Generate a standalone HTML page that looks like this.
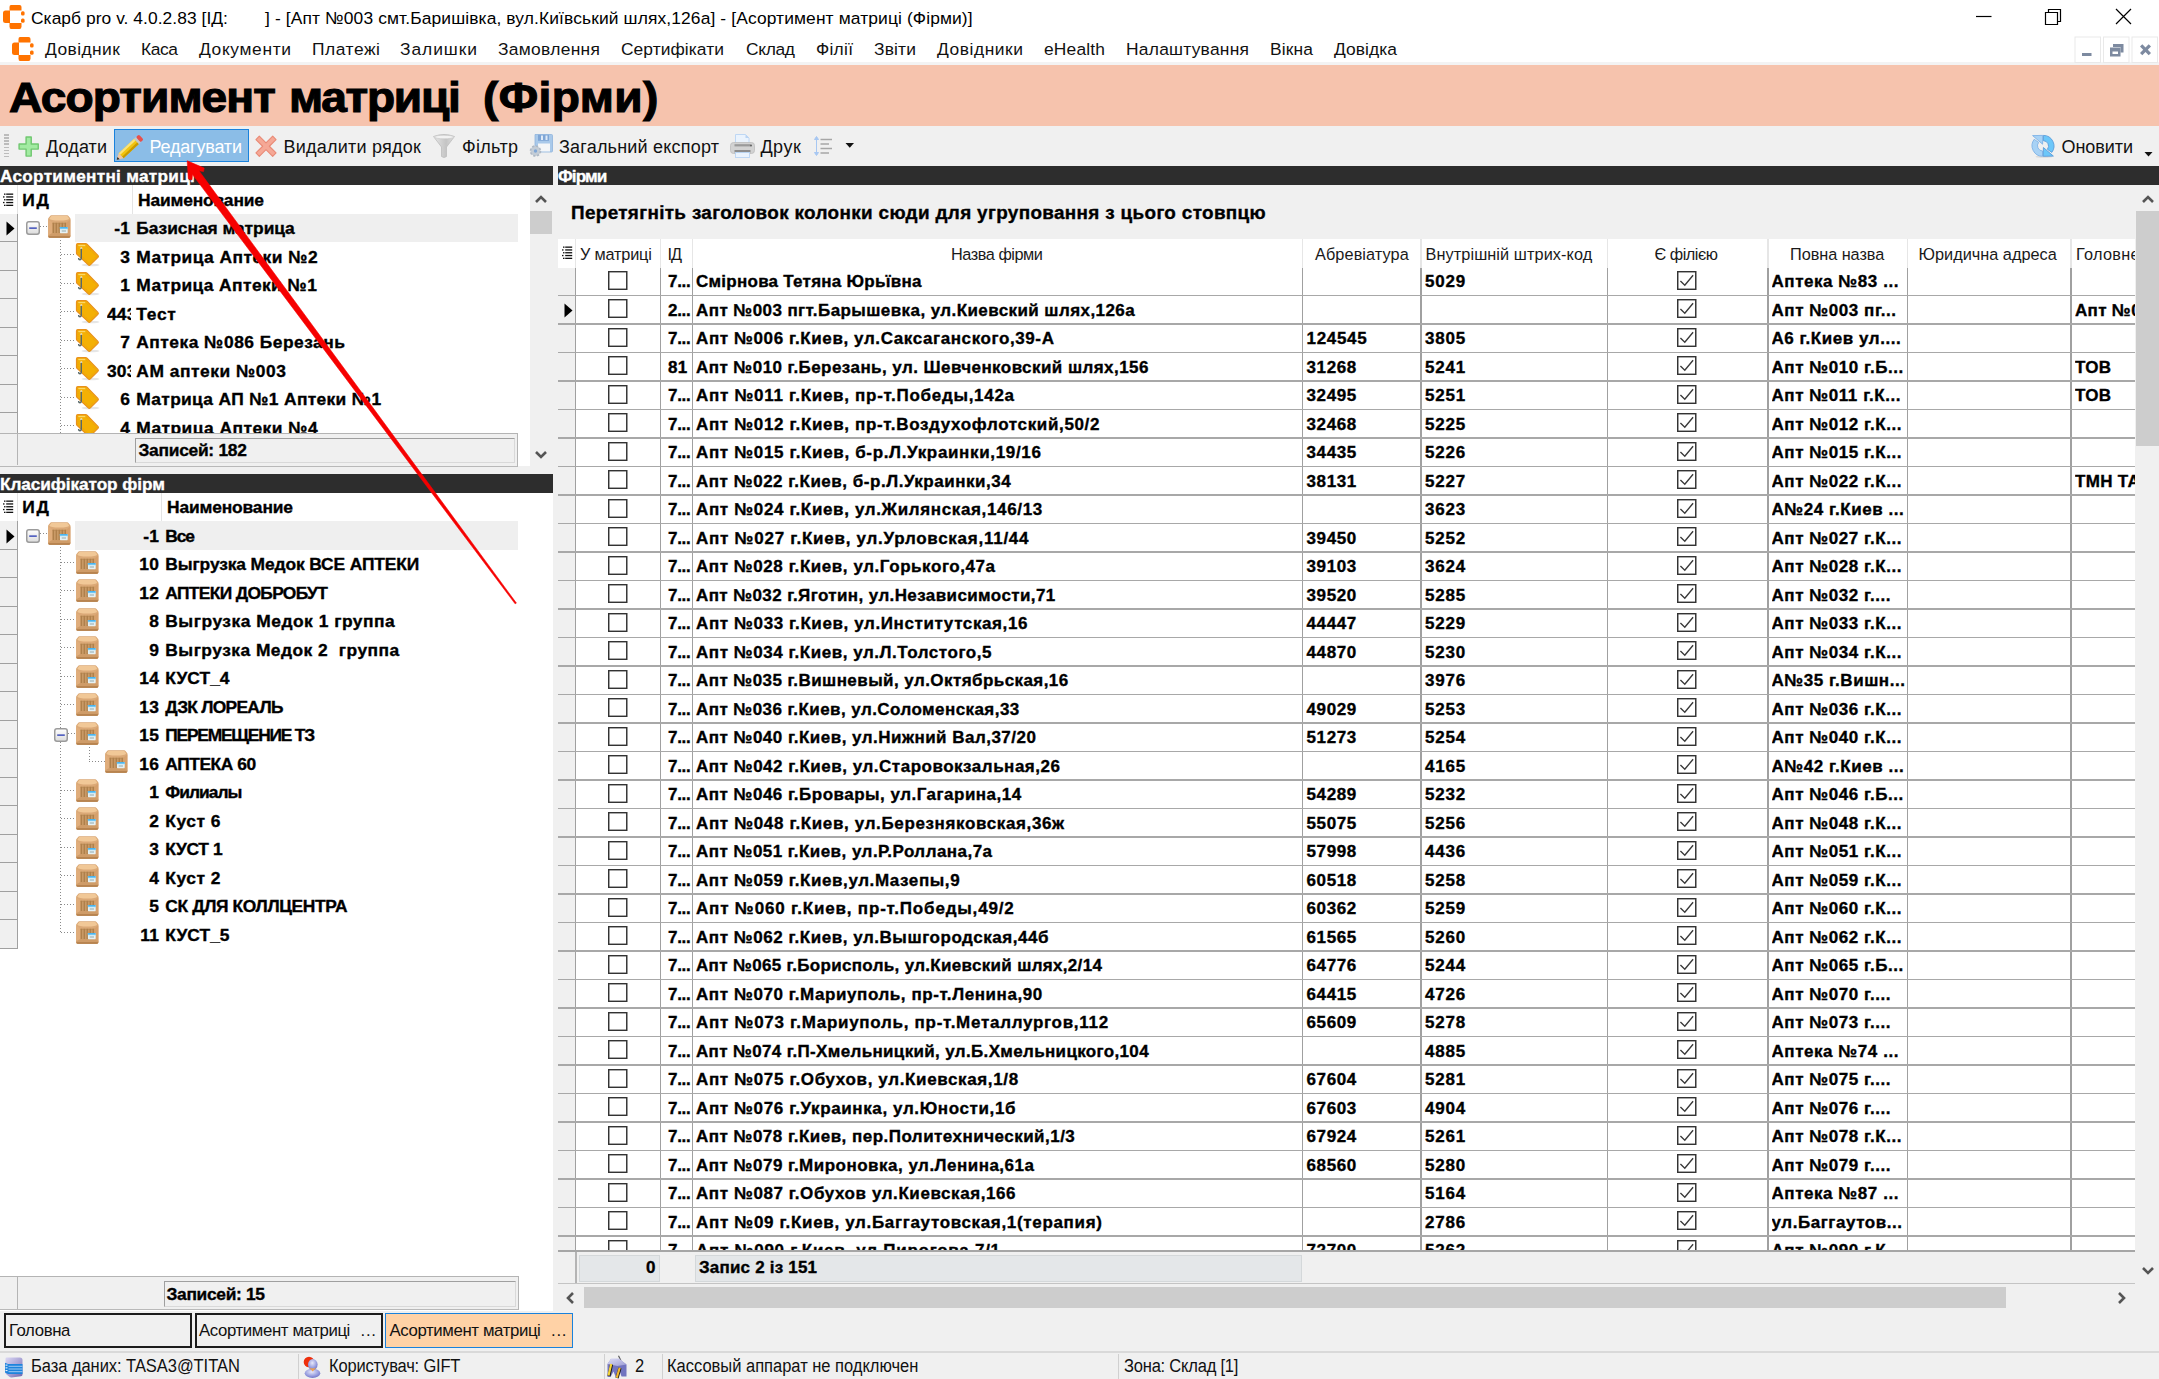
<!DOCTYPE html>
<html><head><meta charset="utf-8"><title>Скарб pro</title>
<style>
html,body{margin:0;padding:0}
body{width:2159px;height:1379px;position:relative;overflow:hidden;background:#f0f0f0;font-family:"Liberation Sans",sans-serif;color:#000}
.a{position:absolute;box-sizing:border-box}
.t{position:absolute;white-space:nowrap;line-height:20px;height:20px}
.b{-webkit-text-stroke:0.35px}
.hv{-webkit-text-stroke:1.1px #000}
svg{position:absolute;overflow:visible}
</style></head><body>
<div class="a" style="left:0px;top:0px;width:2159px;height:36px;background:#fff;"></div><div class="a" style="left:0px;top:36px;width:2159px;height:27px;background:#fff;"></div><div class="a" style="left:0px;top:62px;width:2159px;height:3px;background:#f3f3f3;"></div><svg style="left:3px;top:5px" width="22" height="25" viewBox="0 0 22 25"><g fill="#ff7300"><path d="M8 0h8.5q2 0 2 2v3.5H6.5V2q0-2 1.5-2z"/><path d="M2.5 5.5H7v12.5H2.5Q0 18 0 15.5v-7.5Q0 5.5 2.5 5.5z"/><path d="M6.5 18h12v3.5q0 2.5-2 2.5H8q-1.5 0-1.5-2.5z"/><rect x="18" y="6.2" width="3.6" height="4.2" rx="1.5"/><rect x="18" y="13.5" width="3.6" height="4.2" rx="1.5"/></g></svg><svg style="left:11.5px;top:36.5px" width="22" height="25" viewBox="0 0 22 25"><g fill="#ff7300"><path d="M8 0h8.5q2 0 2 2v3.5H6.5V2q0-2 1.5-2z"/><path d="M2.5 5.5H7v12.5H2.5Q0 18 0 15.5v-7.5Q0 5.5 2.5 5.5z"/><path d="M6.5 18h12v3.5q0 2.5-2 2.5H8q-1.5 0-1.5-2.5z"/><rect x="18" y="6.2" width="3.6" height="4.2" rx="1.5"/><rect x="18" y="13.5" width="3.6" height="4.2" rx="1.5"/></g></svg><span class="t " style="top:8.47px;font-size:17.4px;left:31.0px;letter-spacing:0.05px;">Скарб pro v. 4.0.2.83 [ІД:</span><span class="t " style="top:8.47px;font-size:17.4px;left:265.0px;letter-spacing:0.123px;">] - [Апт №003 смт.Баришівка, вул.Київський шлях,126а] - [Асортимент матриці (Фірми)]</span><svg style="left:1970px;top:0" width="189" height="36" viewBox="0 0 189 36"><g stroke="#000" stroke-width="1.2" fill="none"><path d="M6 16.5h15.5"/><path d="M75.5 12.5h12v12h-12z"/><path d="M78.5 12.5v-3h12v12h-3"/><path d="M146 9l15 15M161 9l-15 15"/></g></svg><svg style="left:2074px;top:36px" width="85" height="28" viewBox="0 0 85 28"><g fill="#fff" stroke="#e9e9e9" stroke-width="1"><rect x="1" y="1" width="25.5" height="25.5"/><rect x="29.5" y="1" width="25.5" height="25.5"/><rect x="58" y="1" width="25.5" height="25.5"/></g><g fill="#7d8aa0"><rect x="8" y="17" width="9.5" height="3"/><path d="M39 8h10.5v8.5h-3v-5.5h-7.5z"/><path d="M36 11.5h10.5v9h-10.5zM38.5 15.5v2.5h5.5v-2.5z" fill-rule="evenodd"/><path d="M66 9.5l2.3-2.3 3.2 3.2 3.2-3.2 2.3 2.3-3.2 3.2 3.2 3.2-2.3 2.3-3.2-3.2-3.2 3.2-2.3-2.3 3.2-3.2z" transform="translate(0,1)"/></g></svg><span class="t " style="top:39.47px;font-size:17.4px;left:45.0px;color:#111;letter-spacing:0.423px;">Довідник</span><span class="t " style="top:39.47px;font-size:17.4px;left:141.0px;color:#111;letter-spacing:-0.427px;">Каса</span><span class="t " style="top:39.47px;font-size:17.4px;left:199.0px;color:#111;letter-spacing:0.636px;">Документи</span><span class="t " style="top:39.47px;font-size:17.4px;left:312.0px;color:#111;letter-spacing:0.545px;">Платежі</span><span class="t " style="top:39.47px;font-size:17.4px;left:400.0px;color:#111;letter-spacing:0.943px;">Залишки</span><span class="t " style="top:39.47px;font-size:17.4px;left:498.0px;color:#111;letter-spacing:0.313px;">Замовлення</span><span class="t " style="top:39.47px;font-size:17.4px;left:621.0px;color:#111;letter-spacing:0.06px;">Сертифікати</span><span class="t " style="top:39.47px;font-size:17.4px;left:746.0px;color:#111;letter-spacing:-0.343px;">Склад</span><span class="t " style="top:39.47px;font-size:17.4px;left:816.0px;color:#111;letter-spacing:0.267px;">Філії</span><span class="t " style="top:39.47px;font-size:17.4px;left:874.0px;color:#111;letter-spacing:0.169px;">Звіти</span><span class="t " style="top:39.47px;font-size:17.4px;left:937.0px;color:#111;letter-spacing:0.549px;">Довідники</span><span class="t " style="top:39.47px;font-size:17.4px;left:1044.0px;color:#111;letter-spacing:0.176px;">eHealth</span><span class="t " style="top:39.47px;font-size:17.4px;left:1126.0px;color:#111;letter-spacing:0.251px;">Налаштування</span><span class="t " style="top:39.47px;font-size:17.4px;left:1270.0px;color:#111;letter-spacing:0.136px;">Вікна</span><span class="t " style="top:39.47px;font-size:17.4px;left:1334.0px;color:#111;letter-spacing:0.06px;">Довідка</span><div class="a" style="left:0px;top:64.5px;width:2159px;height:61.5px;background:#f6c3ad;"></div><span class="t hv b" style="top:86.84px;left:8.60px;font-size:42.9px;letter-spacing:-0.86px;transform:scaleX(1.075);transform-origin:0 0;font-weight:bold;">Асортимент</span><span class="t hv b" style="top:86.84px;left:288.60px;font-size:42.9px;letter-spacing:-1.178px;transform:scaleX(1.075);transform-origin:0 0;font-weight:bold;">матриці</span><span class="t hv b" style="top:86.84px;left:483.00px;font-size:42.9px;letter-spacing:0.381px;transform:scaleX(1.075);transform-origin:0 0;font-weight:bold;">(Фірми)</span><div class="a" style="left:0px;top:126px;width:2159px;height:40px;background:#f0f0f0;"></div><div class="a" style="left:4.3px;top:134.3px;width:5.2px;height:1.4px;background:#bcbcbc;"></div><div class="a" style="left:4.3px;top:137.35000000000002px;width:5.2px;height:1.4px;background:#bcbcbc;"></div><div class="a" style="left:4.3px;top:140.4px;width:5.2px;height:1.4px;background:#bcbcbc;"></div><div class="a" style="left:4.3px;top:143.45000000000002px;width:5.2px;height:1.4px;background:#bcbcbc;"></div><div class="a" style="left:4.3px;top:146.5px;width:5.2px;height:1.4px;background:#bcbcbc;"></div><div class="a" style="left:4.3px;top:149.55px;width:5.2px;height:1.4px;background:#bcbcbc;"></div><div class="a" style="left:4.3px;top:152.60000000000002px;width:5.2px;height:1.4px;background:#bcbcbc;"></div><div class="a" style="left:4.3px;top:155.65px;width:5.2px;height:1.4px;background:#bcbcbc;"></div><svg style="left:17.6px;top:135.5px" width="21.8" height="21.5" viewBox="0 0 23 23"><path d="M8.5 1h5.5v7.5h7.5v5.5h-7.5v7.5h-5.5v-7.5h-7.5v-5.5h7.5z" fill="#a2eba2" stroke="#70c770" stroke-width="1.5" stroke-linejoin="round"/></svg><span class="t " style="top:137.26px;font-size:18px;left:46.0px;color:#111;letter-spacing:0.122px;">Додати</span><div class="a" style="left:114px;top:129.3px;width:134.8px;height:33px;background:#8bbde7;border:1.6px solid #1a82dc;"></div><svg style="left:117px;top:133px" width="28" height="27" viewBox="0 0 28 27"><g transform="rotate(-43 14 13.5)"><rect x="0.5" y="10" width="21" height="7" fill="#f1c40f"/><rect x="0.5" y="10" width="21" height="2.3" fill="#f9e27a"/><rect x="0.5" y="14.8" width="21" height="2.2" fill="#c99a00"/><path d="M0.5 10l-6 3.5 6 3.5z" fill="#f3c6a0"/><path d="M-5.5 13.5l2.5-1.5v3z" fill="#222"/><rect x="21.5" y="10" width="2.5" height="7" fill="#c8c8c8"/><rect x="24" y="10" width="4" height="7" rx="1.5" fill="#e8504a"/></g></svg><span class="t " style="top:137.26px;font-size:18px;left:149.5px;color:#fff;letter-spacing:-0.192px;">Редагувати</span><svg style="left:254.7px;top:135px" width="22" height="22.5" viewBox="0 0 23 23"><path d="M4.5 1l7 7 7-7 3.5 3.5-7 7 7 7-3.5 3.5-7-7-7 7-3.5-3.5 7-7-7-7z" fill="#f5a896" stroke="#e98a76" stroke-width="1.2" stroke-linejoin="round"/></svg><span class="t " style="top:137.26px;font-size:18px;left:283.5px;color:#111;letter-spacing:0.227px;">Видалити рядок</span><svg style="left:433px;top:134px" width="22" height="24" viewBox="0 0 22 24"><defs><linearGradient id="fg" x1="0" x2="1"><stop offset="0" stop-color="#e6e6e6"/><stop offset="0.6" stop-color="#c4c4c4"/><stop offset="1" stop-color="#e0e0e0"/></linearGradient></defs><path d="M0.5 2.5q10.5-4 21 0l-8 10.5v9.5q-2.5 2-5 0v-9.5z" fill="url(#fg)" stroke="#bdbdbd" stroke-width="0.8"/><ellipse cx="11" cy="3" rx="9.5" ry="1.8" fill="#f2f2f2" stroke="#c8c8c8" stroke-width="0.6"/></svg><span class="t " style="top:137.26px;font-size:18px;left:462.0px;color:#111;letter-spacing:0.31px;">Фільтр</span><svg style="left:530px;top:134px" width="23" height="24" viewBox="0 0 23 24"><path d="M5 0.5h16.5q1 0 1 1v15.5q0 1-1 1h-16.5z" fill="#a9c9ea" stroke="#8fb4dc" stroke-width="0.8"/><rect x="8" y="0.8" width="11" height="6" fill="#7fa6d6"/><rect x="11" y="1.5" width="2" height="4.5" fill="#dfeaf7"/><rect x="15.5" y="1.5" width="2" height="4.5" fill="#dfeaf7"/><rect x="8" y="9.5" width="12" height="8" fill="#f4f6f8"/><circle cx="5.5" cy="17" r="5" fill="#c3ccd6" stroke="#aeb8c4" stroke-width="1.6" stroke-dasharray="2.2 1.7"/><circle cx="5.5" cy="17" r="1.7" fill="#7fa6d6"/></svg><span class="t " style="top:137.26px;font-size:18px;left:559.0px;color:#111;letter-spacing:0.207px;">Загальний експорт</span><svg style="left:730px;top:134px" width="25" height="24" viewBox="0 0 25 24"><path d="M5.5 0.5h10l3.5 3.5v7h-13.5z" fill="#eaf3fd" stroke="#b9d4f3" stroke-width="0.9"/><path d="M15.5 0.5v3.5h3.5z" fill="#b9d4f3"/><rect x="0.5" y="8.5" width="24" height="11" rx="3" fill="#d2d2d2" stroke="#bcbcbc" stroke-width="0.8"/><rect x="4.5" y="10.2" width="16" height="2.2" fill="#9a9a9a"/><rect x="4.5" y="16" width="16" height="2.5" fill="#8c8c8c"/><rect x="5.5" y="18.5" width="14" height="5" fill="#eaf3fd" stroke="#b9d4f3" stroke-width="0.9"/><circle cx="21" cy="11.5" r="0.9" fill="#555"/></svg><span class="t " style="top:137.26px;font-size:18px;left:760.4px;color:#111;letter-spacing:0.543px;">Друк</span><svg style="left:813px;top:136px" width="42" height="20" viewBox="0 0 42 20"><g stroke="#a6a6a6" stroke-width="1.5"><path d="M7.5 3.5h11.5M7.5 8h8.5M7.5 12.5h11.5M7.5 17h8.5"/></g><g fill="#a7c7f2" stroke="#a7c7f2" stroke-width="1"><path d="M3.5 2v16" fill="none"/><path d="M3.5 0.5l2 3h-4zM3.5 19.5l2-3h-4z"/></g><path d="M32.5 7h8.5l-4.25 4.8z" fill="#111"/></svg><svg style="left:2032px;top:135px" width="22" height="23" viewBox="0 0 22 23"><ellipse cx="12" cy="21.8" rx="8.5" ry="1" fill="#d9d9d9"/><g id="rh" fill="#a8d2f5" stroke="#7fb2e6" stroke-width="0.9" stroke-linejoin="round"><path d="M10.6 21.3A10.6 10.6 0 0 1 2.2 4.3L6.6 7.4A5.3 5.3 0 0 0 10.6 16z"/><path d="M0.6 0.6L10.8 0.4 10.6 9.2z"/></g><g transform="rotate(180 11 10.85)" fill="#6cc7f9" stroke="#5a9cda" stroke-width="0.9" stroke-linejoin="round"><path d="M10.6 21.3A10.6 10.6 0 0 1 2.2 4.3L6.6 7.4A5.3 5.3 0 0 0 10.6 16z"/><path d="M0.6 0.6L10.8 0.4 10.6 9.2z"/></g></svg><span class="t " style="top:137.26px;font-size:18px;left:2061.5px;color:#111;letter-spacing:-0.068px;">Оновити</span><svg style="left:2144px;top:152px" width="9" height="5" viewBox="0 0 9 5"><path d="M0.5 0h8l-4 4.5z" fill="#111"/></svg><div class="a" style="left:0px;top:165.5px;width:553px;height:19.5px;background:#2d2d2d;"></div><div class="a" style="left:558px;top:165.5px;width:1601px;height:19.5px;background:#2d2d2d;"></div><span class="t b" style="top:166.04px;font-size:17.2px;left:0.0px;font-weight:bold;color:#fff;letter-spacing:0.287px;">Асортиментні матриці</span><span class="t b" style="top:166.04px;font-size:17.2px;left:558.0px;font-weight:bold;color:#fff;letter-spacing:-0.89px;">Фірми</span><div class="a" style="left:0px;top:185px;width:553px;height:281px;background:#fff;"></div><svg style="left:3px;top:192.5px" width="11" height="15" viewBox="0 0 11 15"><g fill="#111"><rect x="1" y="0.5" width="1.5" height="1.3"/><rect x="3.2" y="0.5" width="7" height="1.3"/><rect x="0" y="3.3" width="1.5" height="1.3"/><rect x="3.2" y="3.3" width="7" height="1.3"/><rect x="1" y="6.1" width="1.5" height="1.3"/><rect x="3.2" y="6.1" width="7" height="1.3"/><rect x="0" y="8.899999999999999" width="1.5" height="1.3"/><rect x="3.2" y="8.899999999999999" width="7" height="1.3"/><rect x="1" y="11.7" width="1.5" height="1.3"/><rect x="3.2" y="11.7" width="7" height="1.3"/></g></svg><div class="a" style="left:17px;top:185px;width:1px;height:29px;background:#e4e4e4;"></div><div class="a" style="left:132px;top:185px;width:1px;height:29px;background:#e4e4e4;"></div><span class="t b" style="top:189.97px;font-size:17.4px;left:22.2px;font-weight:bold;letter-spacing:1.918px;">ИД</span><span class="t b" style="top:189.97px;font-size:17.4px;left:138.0px;font-weight:bold;letter-spacing:-0.148px;">Наименование</span><div class="a" style="left:0;top:213.5px;width:529px;height:219.5px;overflow:hidden"><div class="a" style="left:0px;top:0px;width:17.5px;height:228.0px;background:#f0f0f0;border-right:1.5px solid #a0a0a0;"></div><div class="a" style="left:0px;top:27.5px;width:17px;height:1.2px;background:#a0a0a0;"></div><div class="a" style="left:0px;top:56.0px;width:17px;height:1.2px;background:#a0a0a0;"></div><div class="a" style="left:0px;top:84.5px;width:17px;height:1.2px;background:#a0a0a0;"></div><div class="a" style="left:0px;top:113.0px;width:17px;height:1.2px;background:#a0a0a0;"></div><div class="a" style="left:0px;top:141.5px;width:17px;height:1.2px;background:#a0a0a0;"></div><div class="a" style="left:0px;top:170.0px;width:17px;height:1.2px;background:#a0a0a0;"></div><div class="a" style="left:0px;top:198.5px;width:17px;height:1.2px;background:#a0a0a0;"></div><div class="a" style="left:0px;top:227.0px;width:17px;height:1.2px;background:#a0a0a0;"></div><div class="a" style="left:75px;top:0px;width:443px;height:28.5px;background:#efefef;"></div><svg style="left:5.5px;top:7.5px" width="9" height="15" viewBox="0 0 9 15"><path d="M0.5 0.5v14l8-7z" fill="#000"/></svg><div class="a" style="left:60px;top:26px;width:1px;height:193.5px;background:repeating-linear-gradient(180deg,#8a8a8a 0 1px,transparent 1px 3px)"></div><svg style="left:25.5px;top:7.5px" width="14" height="14" viewBox="0 0 14 14"><defs><linearGradient id="eg1" x1="0" y1="0" x2="0" y2="1"><stop offset="0" stop-color="#fff"/><stop offset="1" stop-color="#dcdcdc"/></linearGradient></defs><rect x="0.75" y="0.75" width="12.5" height="12.5" rx="2.2" fill="url(#eg1)" stroke="#9b9b9b" stroke-width="1.5"/><rect x="3.2" y="6.3" width="7.6" height="1.7" fill="#5563c1"/></svg><div class="a" style="left:40px;top:12.4px;width:8px;height:1px;background:repeating-linear-gradient(90deg,#8a8a8a 0 1px,transparent 1px 3px)"></div><svg style="left:48.4px;top:1.3px" width="22.6" height="22.8" viewBox="0 0 22.6 22.8"><path d="M3.3 0.3h16q0.7 0 1.2 0.6l1.6 2q0.4 0.5 0.4 1.2v16.8q0 1.6-1.6 1.6h-19.2q-1.6 0-1.6-1.6v-16.8q0-0.7 0.4-1.2l1.6-2q0.5-0.6 1.2-0.6z" fill="#dba977"/><path d="M3.3 0.9h16l1.9 2.6q-1 2-9.9 2t-9.9-2z" fill="#f1c897"/><path d="M0.3 4.5l4.2 3.3v10.2l-4.2 3.2z" fill="#e0ad7b"/><path d="M22.3 4.5l-4.2 3.3v10.2l4.2 3.2z" fill="#d6a06c"/><rect x="4.5" y="7.8" width="13.6" height="10.2" fill="#c99a66"/><g fill="#a97a45"><rect x="4.7" y="7.8" width="1.1" height="10.2"/><rect x="7.7" y="7.8" width="1.1" height="10.2"/><rect x="10.7" y="7.8" width="1.1" height="10.2"/><rect x="13.7" y="7.8" width="1.1" height="10.2"/><rect x="16.7" y="7.8" width="1.1" height="10.2"/></g><rect x="4.5" y="7.8" width="13.6" height="1" fill="#b28350" opacity="0.6"/><path d="M0.3 20.3l4.2-2.3h13.6l4.2 2.3v0.9q0 1.6-1.6 1.6h-18.8q-1.6 0-1.6-1.6z" fill="#cf9c68"/><path d="M0.4 21.2h21.8q0 1.6-1.6 1.6h-18.6q-1.6 0-1.6-1.6z" fill="#b17d48"/><rect x="11.9" y="11.9" width="7.8" height="6.4" rx="0.7" fill="#e6f1f3"/><path d="M12.6 11.9h6.4q0.7 0 0.7 0.7v1.5h-7.8v-1.5q0-0.7 0.7-0.7z" fill="#49b4ef"/><rect x="11.9" y="13.4" width="7.8" height="0.8" fill="#8dd6f8"/><rect x="13.7" y="15.1" width="4.3" height="1.8" fill="#b9c9cc"/></svg><span class="t b" style="top:4.87px;left:70px;width:60px;text-align:right;font-size:17.4px;font-weight:bold;letter-spacing:0.15px">-1</span><span class="t b" style="top:4.87px;font-size:17.4px;left:136.3px;font-weight:bold;letter-spacing:-0.051px;">Базисная матрица</span><div class="a" style="left:61px;top:40.9px;width:15px;height:1px;background:repeating-linear-gradient(90deg,#8a8a8a 0 1px,transparent 1px 3px)"></div><svg style="left:76.4px;top:29.8px" width="24" height="24" viewBox="0 0 24 24"><ellipse cx="14.5" cy="22" rx="9" ry="1.3" fill="#e6e6e6"/><path d="M1.9 0.6H9.6Q10.4 0.6 11 1.2L21.9 12.4Q22.8 13.4 21.9 14.3L14.3 21.9Q13.3 22.8 12.3 21.9L1 11.3Q0.5 10.8 0.5 10V2Q0.5 0.6 1.9 0.6Z" fill="#f4b004" stroke="#e8901c" stroke-width="1.2"/><path d="M2.2 2.3H9.4L20.3 13.4L13.3 20.4L2.2 9.9Z" fill="none" stroke="#e39a12" stroke-width="0.6" stroke-dasharray="1.2 0.8"/><path d="M2.3 2.5h7" stroke="#fbd768" stroke-width="1.3" fill="none"/><circle cx="5.3" cy="5.3" r="1.1" fill="#f3ead0"/><path d="M5.3 5.8V14.5Q5.3 16.8 3.9 16.8Q2.6 16.8 2.6 15" fill="none" stroke="#586868" stroke-width="1.4"/></svg><span class="t b" style="top:33.37px;left:70px;width:60px;text-align:right;font-size:17.4px;font-weight:bold;letter-spacing:0.15px">3</span><span class="t b" style="top:33.37px;font-size:17.4px;left:136.3px;font-weight:bold;letter-spacing:0.452px;">Матрица Аптеки №2</span><div class="a" style="left:61px;top:69.4px;width:15px;height:1px;background:repeating-linear-gradient(90deg,#8a8a8a 0 1px,transparent 1px 3px)"></div><svg style="left:76.4px;top:58.3px" width="24" height="24" viewBox="0 0 24 24"><ellipse cx="14.5" cy="22" rx="9" ry="1.3" fill="#e6e6e6"/><path d="M1.9 0.6H9.6Q10.4 0.6 11 1.2L21.9 12.4Q22.8 13.4 21.9 14.3L14.3 21.9Q13.3 22.8 12.3 21.9L1 11.3Q0.5 10.8 0.5 10V2Q0.5 0.6 1.9 0.6Z" fill="#f4b004" stroke="#e8901c" stroke-width="1.2"/><path d="M2.2 2.3H9.4L20.3 13.4L13.3 20.4L2.2 9.9Z" fill="none" stroke="#e39a12" stroke-width="0.6" stroke-dasharray="1.2 0.8"/><path d="M2.3 2.5h7" stroke="#fbd768" stroke-width="1.3" fill="none"/><circle cx="5.3" cy="5.3" r="1.1" fill="#f3ead0"/><path d="M5.3 5.8V14.5Q5.3 16.8 3.9 16.8Q2.6 16.8 2.6 15" fill="none" stroke="#586868" stroke-width="1.4"/></svg><span class="t b" style="top:61.87px;left:70px;width:60px;text-align:right;font-size:17.4px;font-weight:bold;letter-spacing:0.15px">1</span><span class="t b" style="top:61.87px;font-size:17.4px;left:136.3px;font-weight:bold;letter-spacing:0.402px;">Матрица Аптеки №1</span><div class="a" style="left:61px;top:97.9px;width:15px;height:1px;background:repeating-linear-gradient(90deg,#8a8a8a 0 1px,transparent 1px 3px)"></div><svg style="left:76.4px;top:86.8px" width="24" height="24" viewBox="0 0 24 24"><ellipse cx="14.5" cy="22" rx="9" ry="1.3" fill="#e6e6e6"/><path d="M1.9 0.6H9.6Q10.4 0.6 11 1.2L21.9 12.4Q22.8 13.4 21.9 14.3L14.3 21.9Q13.3 22.8 12.3 21.9L1 11.3Q0.5 10.8 0.5 10V2Q0.5 0.6 1.9 0.6Z" fill="#f4b004" stroke="#e8901c" stroke-width="1.2"/><path d="M2.2 2.3H9.4L20.3 13.4L13.3 20.4L2.2 9.9Z" fill="none" stroke="#e39a12" stroke-width="0.6" stroke-dasharray="1.2 0.8"/><path d="M2.3 2.5h7" stroke="#fbd768" stroke-width="1.3" fill="none"/><circle cx="5.3" cy="5.3" r="1.1" fill="#f3ead0"/><path d="M5.3 5.8V14.5Q5.3 16.8 3.9 16.8Q2.6 16.8 2.6 15" fill="none" stroke="#586868" stroke-width="1.4"/></svg><span class="t b" style="top:90.37px;font-size:17.4px;left:107px;font-weight:bold;letter-spacing:0.15px;width:24px;overflow:hidden;">443</span><span class="t b" style="top:90.37px;font-size:17.4px;left:136.3px;font-weight:bold;letter-spacing:0.73px;">Тест</span><div class="a" style="left:61px;top:126.4px;width:15px;height:1px;background:repeating-linear-gradient(90deg,#8a8a8a 0 1px,transparent 1px 3px)"></div><svg style="left:76.4px;top:115.3px" width="24" height="24" viewBox="0 0 24 24"><ellipse cx="14.5" cy="22" rx="9" ry="1.3" fill="#e6e6e6"/><path d="M1.9 0.6H9.6Q10.4 0.6 11 1.2L21.9 12.4Q22.8 13.4 21.9 14.3L14.3 21.9Q13.3 22.8 12.3 21.9L1 11.3Q0.5 10.8 0.5 10V2Q0.5 0.6 1.9 0.6Z" fill="#f4b004" stroke="#e8901c" stroke-width="1.2"/><path d="M2.2 2.3H9.4L20.3 13.4L13.3 20.4L2.2 9.9Z" fill="none" stroke="#e39a12" stroke-width="0.6" stroke-dasharray="1.2 0.8"/><path d="M2.3 2.5h7" stroke="#fbd768" stroke-width="1.3" fill="none"/><circle cx="5.3" cy="5.3" r="1.1" fill="#f3ead0"/><path d="M5.3 5.8V14.5Q5.3 16.8 3.9 16.8Q2.6 16.8 2.6 15" fill="none" stroke="#586868" stroke-width="1.4"/></svg><span class="t b" style="top:118.87px;left:70px;width:60px;text-align:right;font-size:17.4px;font-weight:bold;letter-spacing:0.15px">7</span><span class="t b" style="top:118.87px;font-size:17.4px;left:136.3px;font-weight:bold;letter-spacing:0.48px;">Аптека №086 Березань</span><div class="a" style="left:61px;top:154.9px;width:15px;height:1px;background:repeating-linear-gradient(90deg,#8a8a8a 0 1px,transparent 1px 3px)"></div><svg style="left:76.4px;top:143.8px" width="24" height="24" viewBox="0 0 24 24"><ellipse cx="14.5" cy="22" rx="9" ry="1.3" fill="#e6e6e6"/><path d="M1.9 0.6H9.6Q10.4 0.6 11 1.2L21.9 12.4Q22.8 13.4 21.9 14.3L14.3 21.9Q13.3 22.8 12.3 21.9L1 11.3Q0.5 10.8 0.5 10V2Q0.5 0.6 1.9 0.6Z" fill="#f4b004" stroke="#e8901c" stroke-width="1.2"/><path d="M2.2 2.3H9.4L20.3 13.4L13.3 20.4L2.2 9.9Z" fill="none" stroke="#e39a12" stroke-width="0.6" stroke-dasharray="1.2 0.8"/><path d="M2.3 2.5h7" stroke="#fbd768" stroke-width="1.3" fill="none"/><circle cx="5.3" cy="5.3" r="1.1" fill="#f3ead0"/><path d="M5.3 5.8V14.5Q5.3 16.8 3.9 16.8Q2.6 16.8 2.6 15" fill="none" stroke="#586868" stroke-width="1.4"/></svg><span class="t b" style="top:147.37px;font-size:17.4px;left:107px;font-weight:bold;letter-spacing:0.15px;width:24px;overflow:hidden;">303</span><span class="t b" style="top:147.37px;font-size:17.4px;left:136.3px;font-weight:bold;letter-spacing:0.52px;">АМ аптеки №003</span><div class="a" style="left:61px;top:183.4px;width:15px;height:1px;background:repeating-linear-gradient(90deg,#8a8a8a 0 1px,transparent 1px 3px)"></div><svg style="left:76.4px;top:172.3px" width="24" height="24" viewBox="0 0 24 24"><ellipse cx="14.5" cy="22" rx="9" ry="1.3" fill="#e6e6e6"/><path d="M1.9 0.6H9.6Q10.4 0.6 11 1.2L21.9 12.4Q22.8 13.4 21.9 14.3L14.3 21.9Q13.3 22.8 12.3 21.9L1 11.3Q0.5 10.8 0.5 10V2Q0.5 0.6 1.9 0.6Z" fill="#f4b004" stroke="#e8901c" stroke-width="1.2"/><path d="M2.2 2.3H9.4L20.3 13.4L13.3 20.4L2.2 9.9Z" fill="none" stroke="#e39a12" stroke-width="0.6" stroke-dasharray="1.2 0.8"/><path d="M2.3 2.5h7" stroke="#fbd768" stroke-width="1.3" fill="none"/><circle cx="5.3" cy="5.3" r="1.1" fill="#f3ead0"/><path d="M5.3 5.8V14.5Q5.3 16.8 3.9 16.8Q2.6 16.8 2.6 15" fill="none" stroke="#586868" stroke-width="1.4"/></svg><span class="t b" style="top:175.87px;left:70px;width:60px;text-align:right;font-size:17.4px;font-weight:bold;letter-spacing:0.15px">6</span><span class="t b" style="top:175.87px;font-size:17.4px;left:136.3px;font-weight:bold;letter-spacing:0.325px;">Матрица АП №1 Аптеки №1</span><div class="a" style="left:61px;top:211.9px;width:15px;height:1px;background:repeating-linear-gradient(90deg,#8a8a8a 0 1px,transparent 1px 3px)"></div><svg style="left:76.4px;top:200.8px" width="24" height="24" viewBox="0 0 24 24"><ellipse cx="14.5" cy="22" rx="9" ry="1.3" fill="#e6e6e6"/><path d="M1.9 0.6H9.6Q10.4 0.6 11 1.2L21.9 12.4Q22.8 13.4 21.9 14.3L14.3 21.9Q13.3 22.8 12.3 21.9L1 11.3Q0.5 10.8 0.5 10V2Q0.5 0.6 1.9 0.6Z" fill="#f4b004" stroke="#e8901c" stroke-width="1.2"/><path d="M2.2 2.3H9.4L20.3 13.4L13.3 20.4L2.2 9.9Z" fill="none" stroke="#e39a12" stroke-width="0.6" stroke-dasharray="1.2 0.8"/><path d="M2.3 2.5h7" stroke="#fbd768" stroke-width="1.3" fill="none"/><circle cx="5.3" cy="5.3" r="1.1" fill="#f3ead0"/><path d="M5.3 5.8V14.5Q5.3 16.8 3.9 16.8Q2.6 16.8 2.6 15" fill="none" stroke="#586868" stroke-width="1.4"/></svg><span class="t b" style="top:204.37px;left:70px;width:60px;text-align:right;font-size:17.4px;font-weight:bold;letter-spacing:0.15px">4</span><span class="t b" style="top:204.37px;font-size:17.4px;left:136.3px;font-weight:bold;letter-spacing:0.452px;">Матрица Аптеки №4</span></div><div class="a" style="left:0px;top:433px;width:517.5px;height:33.5px;background:#f0f0f0;border-top:1.5px solid #b4b4b4;border-bottom:1.5px solid #b9b9b9;border-right:1.5px solid #b4b4b4;"></div><div class="a" style="left:17px;top:434px;width:1.2px;height:31px;background:#b4b4b4;"></div><div class="a" style="left:135px;top:437.5px;width:380px;height:25.5px;background:#f0f0f0;border:1px solid #d9d9d9;border-left:1.5px solid #9f9f9f;border-top:1.5px solid #9f9f9f;"></div><span class="t b" style="top:439.97px;font-size:17.4px;left:138.5px;font-weight:bold;letter-spacing:-0.276px;">Записей: 182</span><div class="a" style="left:529.5px;top:185px;width:23.5px;height:281px;background:#f0f0f0;"></div><div class="a" style="left:530px;top:211px;width:22px;height:23px;background:#cdcdcd;"></div><svg style="left:535px;top:194.5px" width="12" height="8" viewBox="0 0 12 8"><path d="M1 7l5-5 5 5" fill="none" stroke="#555" stroke-width="2.6"/></svg><svg style="left:535px;top:450.5px" width="12" height="8" viewBox="0 0 12 8"><path d="M1 1l5 5 5-5" fill="none" stroke="#555" stroke-width="2.6"/></svg><div class="a" style="left:0px;top:473.5px;width:553px;height:19px;background:#2d2d2d;"></div><span class="t b" style="top:473.54px;font-size:17.2px;left:0.0px;font-weight:bold;color:#fff;letter-spacing:-0.061px;">Класифікатор фірм</span><div class="a" style="left:0px;top:492.5px;width:553px;height:818px;background:#fff;"></div><svg style="left:3px;top:500.0px" width="11" height="15" viewBox="0 0 11 15"><g fill="#111"><rect x="1" y="0.5" width="1.5" height="1.3"/><rect x="3.2" y="0.5" width="7" height="1.3"/><rect x="0" y="3.3" width="1.5" height="1.3"/><rect x="3.2" y="3.3" width="7" height="1.3"/><rect x="1" y="6.1" width="1.5" height="1.3"/><rect x="3.2" y="6.1" width="7" height="1.3"/><rect x="0" y="8.899999999999999" width="1.5" height="1.3"/><rect x="3.2" y="8.899999999999999" width="7" height="1.3"/><rect x="1" y="11.7" width="1.5" height="1.3"/><rect x="3.2" y="11.7" width="7" height="1.3"/></g></svg><div class="a" style="left:17px;top:492.5px;width:1px;height:29px;background:#e4e4e4;"></div><div class="a" style="left:161px;top:492.5px;width:1px;height:29px;background:#e4e4e4;"></div><span class="t b" style="top:497.47px;font-size:17.4px;left:22.2px;font-weight:bold;letter-spacing:1.918px;">ИД</span><span class="t b" style="top:497.47px;font-size:17.4px;left:167.0px;font-weight:bold;letter-spacing:-0.148px;">Наименование</span><div class="a" style="left:0;top:521.0px;width:529px;height:755.0px;overflow:hidden"><div class="a" style="left:0px;top:0px;width:17.5px;height:427.5px;background:#f0f0f0;border-right:1.5px solid #a0a0a0;"></div><div class="a" style="left:0px;top:27.5px;width:17px;height:1.2px;background:#a0a0a0;"></div><div class="a" style="left:0px;top:56.0px;width:17px;height:1.2px;background:#a0a0a0;"></div><div class="a" style="left:0px;top:84.5px;width:17px;height:1.2px;background:#a0a0a0;"></div><div class="a" style="left:0px;top:113.0px;width:17px;height:1.2px;background:#a0a0a0;"></div><div class="a" style="left:0px;top:141.5px;width:17px;height:1.2px;background:#a0a0a0;"></div><div class="a" style="left:0px;top:170.0px;width:17px;height:1.2px;background:#a0a0a0;"></div><div class="a" style="left:0px;top:198.5px;width:17px;height:1.2px;background:#a0a0a0;"></div><div class="a" style="left:0px;top:227.0px;width:17px;height:1.2px;background:#a0a0a0;"></div><div class="a" style="left:0px;top:255.5px;width:17px;height:1.2px;background:#a0a0a0;"></div><div class="a" style="left:0px;top:284.0px;width:17px;height:1.2px;background:#a0a0a0;"></div><div class="a" style="left:0px;top:312.5px;width:17px;height:1.2px;background:#a0a0a0;"></div><div class="a" style="left:0px;top:341.0px;width:17px;height:1.2px;background:#a0a0a0;"></div><div class="a" style="left:0px;top:369.5px;width:17px;height:1.2px;background:#a0a0a0;"></div><div class="a" style="left:0px;top:398.0px;width:17px;height:1.2px;background:#a0a0a0;"></div><div class="a" style="left:0px;top:426.5px;width:17px;height:1.2px;background:#a0a0a0;"></div><div class="a" style="left:75px;top:0px;width:443px;height:28.5px;background:#efefef;"></div><svg style="left:5.5px;top:7.5px" width="9" height="15" viewBox="0 0 9 15"><path d="M0.5 0.5v14l8-7z" fill="#000"/></svg><div class="a" style="left:60px;top:26px;width:1px;height:386.0px;background:repeating-linear-gradient(180deg,#8a8a8a 0 1px,transparent 1px 3px)"></div><svg style="left:25.5px;top:7.5px" width="14" height="14" viewBox="0 0 14 14"><defs><linearGradient id="eg2" x1="0" y1="0" x2="0" y2="1"><stop offset="0" stop-color="#fff"/><stop offset="1" stop-color="#dcdcdc"/></linearGradient></defs><rect x="0.75" y="0.75" width="12.5" height="12.5" rx="2.2" fill="url(#eg2)" stroke="#9b9b9b" stroke-width="1.5"/><rect x="3.2" y="6.3" width="7.6" height="1.7" fill="#5563c1"/></svg><div class="a" style="left:40px;top:12.4px;width:8px;height:1px;background:repeating-linear-gradient(90deg,#8a8a8a 0 1px,transparent 1px 3px)"></div><svg style="left:48.4px;top:1.3px" width="22.6" height="22.8" viewBox="0 0 22.6 22.8"><path d="M3.3 0.3h16q0.7 0 1.2 0.6l1.6 2q0.4 0.5 0.4 1.2v16.8q0 1.6-1.6 1.6h-19.2q-1.6 0-1.6-1.6v-16.8q0-0.7 0.4-1.2l1.6-2q0.5-0.6 1.2-0.6z" fill="#dba977"/><path d="M3.3 0.9h16l1.9 2.6q-1 2-9.9 2t-9.9-2z" fill="#f1c897"/><path d="M0.3 4.5l4.2 3.3v10.2l-4.2 3.2z" fill="#e0ad7b"/><path d="M22.3 4.5l-4.2 3.3v10.2l4.2 3.2z" fill="#d6a06c"/><rect x="4.5" y="7.8" width="13.6" height="10.2" fill="#c99a66"/><g fill="#a97a45"><rect x="4.7" y="7.8" width="1.1" height="10.2"/><rect x="7.7" y="7.8" width="1.1" height="10.2"/><rect x="10.7" y="7.8" width="1.1" height="10.2"/><rect x="13.7" y="7.8" width="1.1" height="10.2"/><rect x="16.7" y="7.8" width="1.1" height="10.2"/></g><rect x="4.5" y="7.8" width="13.6" height="1" fill="#b28350" opacity="0.6"/><path d="M0.3 20.3l4.2-2.3h13.6l4.2 2.3v0.9q0 1.6-1.6 1.6h-18.8q-1.6 0-1.6-1.6z" fill="#cf9c68"/><path d="M0.4 21.2h21.8q0 1.6-1.6 1.6h-18.6q-1.6 0-1.6-1.6z" fill="#b17d48"/><rect x="11.9" y="11.9" width="7.8" height="6.4" rx="0.7" fill="#e6f1f3"/><path d="M12.6 11.9h6.4q0.7 0 0.7 0.7v1.5h-7.8v-1.5q0-0.7 0.7-0.7z" fill="#49b4ef"/><rect x="11.9" y="13.4" width="7.8" height="0.8" fill="#8dd6f8"/><rect x="13.7" y="15.1" width="4.3" height="1.8" fill="#b9c9cc"/></svg><span class="t b" style="top:4.87px;left:99px;width:60px;text-align:right;font-size:17.4px;font-weight:bold;letter-spacing:0.15px">-1</span><span class="t b" style="top:4.87px;font-size:17.4px;left:165.3px;font-weight:bold;letter-spacing:-1.115px;">Все</span><div class="a" style="left:61px;top:40.9px;width:15px;height:1px;background:repeating-linear-gradient(90deg,#8a8a8a 0 1px,transparent 1px 3px)"></div><svg style="left:76.4px;top:29.8px" width="22.6" height="22.8" viewBox="0 0 22.6 22.8"><path d="M3.3 0.3h16q0.7 0 1.2 0.6l1.6 2q0.4 0.5 0.4 1.2v16.8q0 1.6-1.6 1.6h-19.2q-1.6 0-1.6-1.6v-16.8q0-0.7 0.4-1.2l1.6-2q0.5-0.6 1.2-0.6z" fill="#dba977"/><path d="M3.3 0.9h16l1.9 2.6q-1 2-9.9 2t-9.9-2z" fill="#f1c897"/><path d="M0.3 4.5l4.2 3.3v10.2l-4.2 3.2z" fill="#e0ad7b"/><path d="M22.3 4.5l-4.2 3.3v10.2l4.2 3.2z" fill="#d6a06c"/><rect x="4.5" y="7.8" width="13.6" height="10.2" fill="#c99a66"/><g fill="#a97a45"><rect x="4.7" y="7.8" width="1.1" height="10.2"/><rect x="7.7" y="7.8" width="1.1" height="10.2"/><rect x="10.7" y="7.8" width="1.1" height="10.2"/><rect x="13.7" y="7.8" width="1.1" height="10.2"/><rect x="16.7" y="7.8" width="1.1" height="10.2"/></g><rect x="4.5" y="7.8" width="13.6" height="1" fill="#b28350" opacity="0.6"/><path d="M0.3 20.3l4.2-2.3h13.6l4.2 2.3v0.9q0 1.6-1.6 1.6h-18.8q-1.6 0-1.6-1.6z" fill="#cf9c68"/><path d="M0.4 21.2h21.8q0 1.6-1.6 1.6h-18.6q-1.6 0-1.6-1.6z" fill="#b17d48"/><rect x="11.9" y="11.9" width="7.8" height="6.4" rx="0.7" fill="#e6f1f3"/><path d="M12.6 11.9h6.4q0.7 0 0.7 0.7v1.5h-7.8v-1.5q0-0.7 0.7-0.7z" fill="#49b4ef"/><rect x="11.9" y="13.4" width="7.8" height="0.8" fill="#8dd6f8"/><rect x="13.7" y="15.1" width="4.3" height="1.8" fill="#b9c9cc"/></svg><span class="t b" style="top:33.37px;left:99px;width:60px;text-align:right;font-size:17.4px;font-weight:bold;letter-spacing:0.15px">10</span><span class="t b" style="top:33.37px;font-size:17.4px;left:165.3px;font-weight:bold;letter-spacing:-0.113px;">Выгрузка Медок ВСЕ АПТЕКИ</span><div class="a" style="left:61px;top:69.4px;width:15px;height:1px;background:repeating-linear-gradient(90deg,#8a8a8a 0 1px,transparent 1px 3px)"></div><svg style="left:76.4px;top:58.3px" width="22.6" height="22.8" viewBox="0 0 22.6 22.8"><path d="M3.3 0.3h16q0.7 0 1.2 0.6l1.6 2q0.4 0.5 0.4 1.2v16.8q0 1.6-1.6 1.6h-19.2q-1.6 0-1.6-1.6v-16.8q0-0.7 0.4-1.2l1.6-2q0.5-0.6 1.2-0.6z" fill="#dba977"/><path d="M3.3 0.9h16l1.9 2.6q-1 2-9.9 2t-9.9-2z" fill="#f1c897"/><path d="M0.3 4.5l4.2 3.3v10.2l-4.2 3.2z" fill="#e0ad7b"/><path d="M22.3 4.5l-4.2 3.3v10.2l4.2 3.2z" fill="#d6a06c"/><rect x="4.5" y="7.8" width="13.6" height="10.2" fill="#c99a66"/><g fill="#a97a45"><rect x="4.7" y="7.8" width="1.1" height="10.2"/><rect x="7.7" y="7.8" width="1.1" height="10.2"/><rect x="10.7" y="7.8" width="1.1" height="10.2"/><rect x="13.7" y="7.8" width="1.1" height="10.2"/><rect x="16.7" y="7.8" width="1.1" height="10.2"/></g><rect x="4.5" y="7.8" width="13.6" height="1" fill="#b28350" opacity="0.6"/><path d="M0.3 20.3l4.2-2.3h13.6l4.2 2.3v0.9q0 1.6-1.6 1.6h-18.8q-1.6 0-1.6-1.6z" fill="#cf9c68"/><path d="M0.4 21.2h21.8q0 1.6-1.6 1.6h-18.6q-1.6 0-1.6-1.6z" fill="#b17d48"/><rect x="11.9" y="11.9" width="7.8" height="6.4" rx="0.7" fill="#e6f1f3"/><path d="M12.6 11.9h6.4q0.7 0 0.7 0.7v1.5h-7.8v-1.5q0-0.7 0.7-0.7z" fill="#49b4ef"/><rect x="11.9" y="13.4" width="7.8" height="0.8" fill="#8dd6f8"/><rect x="13.7" y="15.1" width="4.3" height="1.8" fill="#b9c9cc"/></svg><span class="t b" style="top:61.87px;left:99px;width:60px;text-align:right;font-size:17.4px;font-weight:bold;letter-spacing:0.15px">12</span><span class="t b" style="top:61.87px;font-size:17.4px;left:165.3px;font-weight:bold;letter-spacing:-0.658px;">АПТЕКИ ДОБРОБУТ</span><div class="a" style="left:61px;top:97.9px;width:15px;height:1px;background:repeating-linear-gradient(90deg,#8a8a8a 0 1px,transparent 1px 3px)"></div><svg style="left:76.4px;top:86.8px" width="22.6" height="22.8" viewBox="0 0 22.6 22.8"><path d="M3.3 0.3h16q0.7 0 1.2 0.6l1.6 2q0.4 0.5 0.4 1.2v16.8q0 1.6-1.6 1.6h-19.2q-1.6 0-1.6-1.6v-16.8q0-0.7 0.4-1.2l1.6-2q0.5-0.6 1.2-0.6z" fill="#dba977"/><path d="M3.3 0.9h16l1.9 2.6q-1 2-9.9 2t-9.9-2z" fill="#f1c897"/><path d="M0.3 4.5l4.2 3.3v10.2l-4.2 3.2z" fill="#e0ad7b"/><path d="M22.3 4.5l-4.2 3.3v10.2l4.2 3.2z" fill="#d6a06c"/><rect x="4.5" y="7.8" width="13.6" height="10.2" fill="#c99a66"/><g fill="#a97a45"><rect x="4.7" y="7.8" width="1.1" height="10.2"/><rect x="7.7" y="7.8" width="1.1" height="10.2"/><rect x="10.7" y="7.8" width="1.1" height="10.2"/><rect x="13.7" y="7.8" width="1.1" height="10.2"/><rect x="16.7" y="7.8" width="1.1" height="10.2"/></g><rect x="4.5" y="7.8" width="13.6" height="1" fill="#b28350" opacity="0.6"/><path d="M0.3 20.3l4.2-2.3h13.6l4.2 2.3v0.9q0 1.6-1.6 1.6h-18.8q-1.6 0-1.6-1.6z" fill="#cf9c68"/><path d="M0.4 21.2h21.8q0 1.6-1.6 1.6h-18.6q-1.6 0-1.6-1.6z" fill="#b17d48"/><rect x="11.9" y="11.9" width="7.8" height="6.4" rx="0.7" fill="#e6f1f3"/><path d="M12.6 11.9h6.4q0.7 0 0.7 0.7v1.5h-7.8v-1.5q0-0.7 0.7-0.7z" fill="#49b4ef"/><rect x="11.9" y="13.4" width="7.8" height="0.8" fill="#8dd6f8"/><rect x="13.7" y="15.1" width="4.3" height="1.8" fill="#b9c9cc"/></svg><span class="t b" style="top:90.37px;left:99px;width:60px;text-align:right;font-size:17.4px;font-weight:bold;letter-spacing:0.15px">8</span><span class="t b" style="top:90.37px;font-size:17.4px;left:165.3px;font-weight:bold;letter-spacing:0.511px;">Выгрузка Медок 1 группа</span><div class="a" style="left:61px;top:126.4px;width:15px;height:1px;background:repeating-linear-gradient(90deg,#8a8a8a 0 1px,transparent 1px 3px)"></div><svg style="left:76.4px;top:115.3px" width="22.6" height="22.8" viewBox="0 0 22.6 22.8"><path d="M3.3 0.3h16q0.7 0 1.2 0.6l1.6 2q0.4 0.5 0.4 1.2v16.8q0 1.6-1.6 1.6h-19.2q-1.6 0-1.6-1.6v-16.8q0-0.7 0.4-1.2l1.6-2q0.5-0.6 1.2-0.6z" fill="#dba977"/><path d="M3.3 0.9h16l1.9 2.6q-1 2-9.9 2t-9.9-2z" fill="#f1c897"/><path d="M0.3 4.5l4.2 3.3v10.2l-4.2 3.2z" fill="#e0ad7b"/><path d="M22.3 4.5l-4.2 3.3v10.2l4.2 3.2z" fill="#d6a06c"/><rect x="4.5" y="7.8" width="13.6" height="10.2" fill="#c99a66"/><g fill="#a97a45"><rect x="4.7" y="7.8" width="1.1" height="10.2"/><rect x="7.7" y="7.8" width="1.1" height="10.2"/><rect x="10.7" y="7.8" width="1.1" height="10.2"/><rect x="13.7" y="7.8" width="1.1" height="10.2"/><rect x="16.7" y="7.8" width="1.1" height="10.2"/></g><rect x="4.5" y="7.8" width="13.6" height="1" fill="#b28350" opacity="0.6"/><path d="M0.3 20.3l4.2-2.3h13.6l4.2 2.3v0.9q0 1.6-1.6 1.6h-18.8q-1.6 0-1.6-1.6z" fill="#cf9c68"/><path d="M0.4 21.2h21.8q0 1.6-1.6 1.6h-18.6q-1.6 0-1.6-1.6z" fill="#b17d48"/><rect x="11.9" y="11.9" width="7.8" height="6.4" rx="0.7" fill="#e6f1f3"/><path d="M12.6 11.9h6.4q0.7 0 0.7 0.7v1.5h-7.8v-1.5q0-0.7 0.7-0.7z" fill="#49b4ef"/><rect x="11.9" y="13.4" width="7.8" height="0.8" fill="#8dd6f8"/><rect x="13.7" y="15.1" width="4.3" height="1.8" fill="#b9c9cc"/></svg><span class="t b" style="top:118.87px;left:99px;width:60px;text-align:right;font-size:17.4px;font-weight:bold;letter-spacing:0.15px">9</span><span class="t b" style="top:118.87px;font-size:17.4px;left:165.3px;font-weight:bold;letter-spacing:0.473px;">Выгрузка Медок 2  группа</span><div class="a" style="left:61px;top:154.9px;width:15px;height:1px;background:repeating-linear-gradient(90deg,#8a8a8a 0 1px,transparent 1px 3px)"></div><svg style="left:76.4px;top:143.8px" width="22.6" height="22.8" viewBox="0 0 22.6 22.8"><path d="M3.3 0.3h16q0.7 0 1.2 0.6l1.6 2q0.4 0.5 0.4 1.2v16.8q0 1.6-1.6 1.6h-19.2q-1.6 0-1.6-1.6v-16.8q0-0.7 0.4-1.2l1.6-2q0.5-0.6 1.2-0.6z" fill="#dba977"/><path d="M3.3 0.9h16l1.9 2.6q-1 2-9.9 2t-9.9-2z" fill="#f1c897"/><path d="M0.3 4.5l4.2 3.3v10.2l-4.2 3.2z" fill="#e0ad7b"/><path d="M22.3 4.5l-4.2 3.3v10.2l4.2 3.2z" fill="#d6a06c"/><rect x="4.5" y="7.8" width="13.6" height="10.2" fill="#c99a66"/><g fill="#a97a45"><rect x="4.7" y="7.8" width="1.1" height="10.2"/><rect x="7.7" y="7.8" width="1.1" height="10.2"/><rect x="10.7" y="7.8" width="1.1" height="10.2"/><rect x="13.7" y="7.8" width="1.1" height="10.2"/><rect x="16.7" y="7.8" width="1.1" height="10.2"/></g><rect x="4.5" y="7.8" width="13.6" height="1" fill="#b28350" opacity="0.6"/><path d="M0.3 20.3l4.2-2.3h13.6l4.2 2.3v0.9q0 1.6-1.6 1.6h-18.8q-1.6 0-1.6-1.6z" fill="#cf9c68"/><path d="M0.4 21.2h21.8q0 1.6-1.6 1.6h-18.6q-1.6 0-1.6-1.6z" fill="#b17d48"/><rect x="11.9" y="11.9" width="7.8" height="6.4" rx="0.7" fill="#e6f1f3"/><path d="M12.6 11.9h6.4q0.7 0 0.7 0.7v1.5h-7.8v-1.5q0-0.7 0.7-0.7z" fill="#49b4ef"/><rect x="11.9" y="13.4" width="7.8" height="0.8" fill="#8dd6f8"/><rect x="13.7" y="15.1" width="4.3" height="1.8" fill="#b9c9cc"/></svg><span class="t b" style="top:147.37px;left:99px;width:60px;text-align:right;font-size:17.4px;font-weight:bold;letter-spacing:0.15px">14</span><span class="t b" style="top:147.37px;font-size:17.4px;left:165.3px;font-weight:bold;letter-spacing:0.054px;">КУСТ_4</span><div class="a" style="left:61px;top:183.4px;width:15px;height:1px;background:repeating-linear-gradient(90deg,#8a8a8a 0 1px,transparent 1px 3px)"></div><svg style="left:76.4px;top:172.3px" width="22.6" height="22.8" viewBox="0 0 22.6 22.8"><path d="M3.3 0.3h16q0.7 0 1.2 0.6l1.6 2q0.4 0.5 0.4 1.2v16.8q0 1.6-1.6 1.6h-19.2q-1.6 0-1.6-1.6v-16.8q0-0.7 0.4-1.2l1.6-2q0.5-0.6 1.2-0.6z" fill="#dba977"/><path d="M3.3 0.9h16l1.9 2.6q-1 2-9.9 2t-9.9-2z" fill="#f1c897"/><path d="M0.3 4.5l4.2 3.3v10.2l-4.2 3.2z" fill="#e0ad7b"/><path d="M22.3 4.5l-4.2 3.3v10.2l4.2 3.2z" fill="#d6a06c"/><rect x="4.5" y="7.8" width="13.6" height="10.2" fill="#c99a66"/><g fill="#a97a45"><rect x="4.7" y="7.8" width="1.1" height="10.2"/><rect x="7.7" y="7.8" width="1.1" height="10.2"/><rect x="10.7" y="7.8" width="1.1" height="10.2"/><rect x="13.7" y="7.8" width="1.1" height="10.2"/><rect x="16.7" y="7.8" width="1.1" height="10.2"/></g><rect x="4.5" y="7.8" width="13.6" height="1" fill="#b28350" opacity="0.6"/><path d="M0.3 20.3l4.2-2.3h13.6l4.2 2.3v0.9q0 1.6-1.6 1.6h-18.8q-1.6 0-1.6-1.6z" fill="#cf9c68"/><path d="M0.4 21.2h21.8q0 1.6-1.6 1.6h-18.6q-1.6 0-1.6-1.6z" fill="#b17d48"/><rect x="11.9" y="11.9" width="7.8" height="6.4" rx="0.7" fill="#e6f1f3"/><path d="M12.6 11.9h6.4q0.7 0 0.7 0.7v1.5h-7.8v-1.5q0-0.7 0.7-0.7z" fill="#49b4ef"/><rect x="11.9" y="13.4" width="7.8" height="0.8" fill="#8dd6f8"/><rect x="13.7" y="15.1" width="4.3" height="1.8" fill="#b9c9cc"/></svg><span class="t b" style="top:175.87px;left:99px;width:60px;text-align:right;font-size:17.4px;font-weight:bold;letter-spacing:0.15px">13</span><span class="t b" style="top:175.87px;font-size:17.4px;left:165.3px;font-weight:bold;letter-spacing:-0.725px;">ДЗК ЛОРЕАЛЬ</span><svg style="left:54px;top:206.5px" width="14" height="14" viewBox="0 0 14 14"><defs><linearGradient id="eg3" x1="0" y1="0" x2="0" y2="1"><stop offset="0" stop-color="#fff"/><stop offset="1" stop-color="#dcdcdc"/></linearGradient></defs><rect x="0.75" y="0.75" width="12.5" height="12.5" rx="2.2" fill="url(#eg3)" stroke="#9b9b9b" stroke-width="1.5"/><rect x="3.2" y="6.3" width="7.6" height="1.7" fill="#5563c1"/></svg><div class="a" style="left:68px;top:211.9px;width:8px;height:1px;background:repeating-linear-gradient(90deg,#8a8a8a 0 1px,transparent 1px 3px)"></div><div class="a" style="left:89px;top:225.5px;width:1px;height:15.5px;background:repeating-linear-gradient(180deg,#8a8a8a 0 1px,transparent 1px 3px)"></div><svg style="left:76.4px;top:200.8px" width="22.6" height="22.8" viewBox="0 0 22.6 22.8"><path d="M3.3 0.3h16q0.7 0 1.2 0.6l1.6 2q0.4 0.5 0.4 1.2v16.8q0 1.6-1.6 1.6h-19.2q-1.6 0-1.6-1.6v-16.8q0-0.7 0.4-1.2l1.6-2q0.5-0.6 1.2-0.6z" fill="#dba977"/><path d="M3.3 0.9h16l1.9 2.6q-1 2-9.9 2t-9.9-2z" fill="#f1c897"/><path d="M0.3 4.5l4.2 3.3v10.2l-4.2 3.2z" fill="#e0ad7b"/><path d="M22.3 4.5l-4.2 3.3v10.2l4.2 3.2z" fill="#d6a06c"/><rect x="4.5" y="7.8" width="13.6" height="10.2" fill="#c99a66"/><g fill="#a97a45"><rect x="4.7" y="7.8" width="1.1" height="10.2"/><rect x="7.7" y="7.8" width="1.1" height="10.2"/><rect x="10.7" y="7.8" width="1.1" height="10.2"/><rect x="13.7" y="7.8" width="1.1" height="10.2"/><rect x="16.7" y="7.8" width="1.1" height="10.2"/></g><rect x="4.5" y="7.8" width="13.6" height="1" fill="#b28350" opacity="0.6"/><path d="M0.3 20.3l4.2-2.3h13.6l4.2 2.3v0.9q0 1.6-1.6 1.6h-18.8q-1.6 0-1.6-1.6z" fill="#cf9c68"/><path d="M0.4 21.2h21.8q0 1.6-1.6 1.6h-18.6q-1.6 0-1.6-1.6z" fill="#b17d48"/><rect x="11.9" y="11.9" width="7.8" height="6.4" rx="0.7" fill="#e6f1f3"/><path d="M12.6 11.9h6.4q0.7 0 0.7 0.7v1.5h-7.8v-1.5q0-0.7 0.7-0.7z" fill="#49b4ef"/><rect x="11.9" y="13.4" width="7.8" height="0.8" fill="#8dd6f8"/><rect x="13.7" y="15.1" width="4.3" height="1.8" fill="#b9c9cc"/></svg><span class="t b" style="top:204.37px;left:99px;width:60px;text-align:right;font-size:17.4px;font-weight:bold;letter-spacing:0.15px">15</span><span class="t b" style="top:204.37px;font-size:17.4px;left:165.3px;font-weight:bold;letter-spacing:-1.225px;">ПЕРЕМЕЩЕНИЕ ТЗ</span><div class="a" style="left:89px;top:240.4px;width:16px;height:1px;background:repeating-linear-gradient(90deg,#8a8a8a 0 1px,transparent 1px 3px)"></div><svg style="left:105.4px;top:229.3px" width="22.6" height="22.8" viewBox="0 0 22.6 22.8"><path d="M3.3 0.3h16q0.7 0 1.2 0.6l1.6 2q0.4 0.5 0.4 1.2v16.8q0 1.6-1.6 1.6h-19.2q-1.6 0-1.6-1.6v-16.8q0-0.7 0.4-1.2l1.6-2q0.5-0.6 1.2-0.6z" fill="#dba977"/><path d="M3.3 0.9h16l1.9 2.6q-1 2-9.9 2t-9.9-2z" fill="#f1c897"/><path d="M0.3 4.5l4.2 3.3v10.2l-4.2 3.2z" fill="#e0ad7b"/><path d="M22.3 4.5l-4.2 3.3v10.2l4.2 3.2z" fill="#d6a06c"/><rect x="4.5" y="7.8" width="13.6" height="10.2" fill="#c99a66"/><g fill="#a97a45"><rect x="4.7" y="7.8" width="1.1" height="10.2"/><rect x="7.7" y="7.8" width="1.1" height="10.2"/><rect x="10.7" y="7.8" width="1.1" height="10.2"/><rect x="13.7" y="7.8" width="1.1" height="10.2"/><rect x="16.7" y="7.8" width="1.1" height="10.2"/></g><rect x="4.5" y="7.8" width="13.6" height="1" fill="#b28350" opacity="0.6"/><path d="M0.3 20.3l4.2-2.3h13.6l4.2 2.3v0.9q0 1.6-1.6 1.6h-18.8q-1.6 0-1.6-1.6z" fill="#cf9c68"/><path d="M0.4 21.2h21.8q0 1.6-1.6 1.6h-18.6q-1.6 0-1.6-1.6z" fill="#b17d48"/><rect x="11.9" y="11.9" width="7.8" height="6.4" rx="0.7" fill="#e6f1f3"/><path d="M12.6 11.9h6.4q0.7 0 0.7 0.7v1.5h-7.8v-1.5q0-0.7 0.7-0.7z" fill="#49b4ef"/><rect x="11.9" y="13.4" width="7.8" height="0.8" fill="#8dd6f8"/><rect x="13.7" y="15.1" width="4.3" height="1.8" fill="#b9c9cc"/></svg><span class="t b" style="top:232.87px;left:99px;width:60px;text-align:right;font-size:17.4px;font-weight:bold;letter-spacing:0.15px">16</span><span class="t b" style="top:232.87px;font-size:17.4px;left:165.3px;font-weight:bold;letter-spacing:-0.435px;">АПТЕКА 60</span><div class="a" style="left:61px;top:268.9px;width:15px;height:1px;background:repeating-linear-gradient(90deg,#8a8a8a 0 1px,transparent 1px 3px)"></div><svg style="left:76.4px;top:257.8px" width="22.6" height="22.8" viewBox="0 0 22.6 22.8"><path d="M3.3 0.3h16q0.7 0 1.2 0.6l1.6 2q0.4 0.5 0.4 1.2v16.8q0 1.6-1.6 1.6h-19.2q-1.6 0-1.6-1.6v-16.8q0-0.7 0.4-1.2l1.6-2q0.5-0.6 1.2-0.6z" fill="#dba977"/><path d="M3.3 0.9h16l1.9 2.6q-1 2-9.9 2t-9.9-2z" fill="#f1c897"/><path d="M0.3 4.5l4.2 3.3v10.2l-4.2 3.2z" fill="#e0ad7b"/><path d="M22.3 4.5l-4.2 3.3v10.2l4.2 3.2z" fill="#d6a06c"/><rect x="4.5" y="7.8" width="13.6" height="10.2" fill="#c99a66"/><g fill="#a97a45"><rect x="4.7" y="7.8" width="1.1" height="10.2"/><rect x="7.7" y="7.8" width="1.1" height="10.2"/><rect x="10.7" y="7.8" width="1.1" height="10.2"/><rect x="13.7" y="7.8" width="1.1" height="10.2"/><rect x="16.7" y="7.8" width="1.1" height="10.2"/></g><rect x="4.5" y="7.8" width="13.6" height="1" fill="#b28350" opacity="0.6"/><path d="M0.3 20.3l4.2-2.3h13.6l4.2 2.3v0.9q0 1.6-1.6 1.6h-18.8q-1.6 0-1.6-1.6z" fill="#cf9c68"/><path d="M0.4 21.2h21.8q0 1.6-1.6 1.6h-18.6q-1.6 0-1.6-1.6z" fill="#b17d48"/><rect x="11.9" y="11.9" width="7.8" height="6.4" rx="0.7" fill="#e6f1f3"/><path d="M12.6 11.9h6.4q0.7 0 0.7 0.7v1.5h-7.8v-1.5q0-0.7 0.7-0.7z" fill="#49b4ef"/><rect x="11.9" y="13.4" width="7.8" height="0.8" fill="#8dd6f8"/><rect x="13.7" y="15.1" width="4.3" height="1.8" fill="#b9c9cc"/></svg><span class="t b" style="top:261.37px;left:99px;width:60px;text-align:right;font-size:17.4px;font-weight:bold;letter-spacing:0.15px">1</span><span class="t b" style="top:261.37px;font-size:17.4px;left:165.3px;font-weight:bold;letter-spacing:-0.952px;">Филиалы</span><div class="a" style="left:61px;top:297.4px;width:15px;height:1px;background:repeating-linear-gradient(90deg,#8a8a8a 0 1px,transparent 1px 3px)"></div><svg style="left:76.4px;top:286.3px" width="22.6" height="22.8" viewBox="0 0 22.6 22.8"><path d="M3.3 0.3h16q0.7 0 1.2 0.6l1.6 2q0.4 0.5 0.4 1.2v16.8q0 1.6-1.6 1.6h-19.2q-1.6 0-1.6-1.6v-16.8q0-0.7 0.4-1.2l1.6-2q0.5-0.6 1.2-0.6z" fill="#dba977"/><path d="M3.3 0.9h16l1.9 2.6q-1 2-9.9 2t-9.9-2z" fill="#f1c897"/><path d="M0.3 4.5l4.2 3.3v10.2l-4.2 3.2z" fill="#e0ad7b"/><path d="M22.3 4.5l-4.2 3.3v10.2l4.2 3.2z" fill="#d6a06c"/><rect x="4.5" y="7.8" width="13.6" height="10.2" fill="#c99a66"/><g fill="#a97a45"><rect x="4.7" y="7.8" width="1.1" height="10.2"/><rect x="7.7" y="7.8" width="1.1" height="10.2"/><rect x="10.7" y="7.8" width="1.1" height="10.2"/><rect x="13.7" y="7.8" width="1.1" height="10.2"/><rect x="16.7" y="7.8" width="1.1" height="10.2"/></g><rect x="4.5" y="7.8" width="13.6" height="1" fill="#b28350" opacity="0.6"/><path d="M0.3 20.3l4.2-2.3h13.6l4.2 2.3v0.9q0 1.6-1.6 1.6h-18.8q-1.6 0-1.6-1.6z" fill="#cf9c68"/><path d="M0.4 21.2h21.8q0 1.6-1.6 1.6h-18.6q-1.6 0-1.6-1.6z" fill="#b17d48"/><rect x="11.9" y="11.9" width="7.8" height="6.4" rx="0.7" fill="#e6f1f3"/><path d="M12.6 11.9h6.4q0.7 0 0.7 0.7v1.5h-7.8v-1.5q0-0.7 0.7-0.7z" fill="#49b4ef"/><rect x="11.9" y="13.4" width="7.8" height="0.8" fill="#8dd6f8"/><rect x="13.7" y="15.1" width="4.3" height="1.8" fill="#b9c9cc"/></svg><span class="t b" style="top:289.87px;left:99px;width:60px;text-align:right;font-size:17.4px;font-weight:bold;letter-spacing:0.15px">2</span><span class="t b" style="top:289.87px;font-size:17.4px;left:165.3px;font-weight:bold;letter-spacing:0.53px;">Куст 6</span><div class="a" style="left:61px;top:325.9px;width:15px;height:1px;background:repeating-linear-gradient(90deg,#8a8a8a 0 1px,transparent 1px 3px)"></div><svg style="left:76.4px;top:314.8px" width="22.6" height="22.8" viewBox="0 0 22.6 22.8"><path d="M3.3 0.3h16q0.7 0 1.2 0.6l1.6 2q0.4 0.5 0.4 1.2v16.8q0 1.6-1.6 1.6h-19.2q-1.6 0-1.6-1.6v-16.8q0-0.7 0.4-1.2l1.6-2q0.5-0.6 1.2-0.6z" fill="#dba977"/><path d="M3.3 0.9h16l1.9 2.6q-1 2-9.9 2t-9.9-2z" fill="#f1c897"/><path d="M0.3 4.5l4.2 3.3v10.2l-4.2 3.2z" fill="#e0ad7b"/><path d="M22.3 4.5l-4.2 3.3v10.2l4.2 3.2z" fill="#d6a06c"/><rect x="4.5" y="7.8" width="13.6" height="10.2" fill="#c99a66"/><g fill="#a97a45"><rect x="4.7" y="7.8" width="1.1" height="10.2"/><rect x="7.7" y="7.8" width="1.1" height="10.2"/><rect x="10.7" y="7.8" width="1.1" height="10.2"/><rect x="13.7" y="7.8" width="1.1" height="10.2"/><rect x="16.7" y="7.8" width="1.1" height="10.2"/></g><rect x="4.5" y="7.8" width="13.6" height="1" fill="#b28350" opacity="0.6"/><path d="M0.3 20.3l4.2-2.3h13.6l4.2 2.3v0.9q0 1.6-1.6 1.6h-18.8q-1.6 0-1.6-1.6z" fill="#cf9c68"/><path d="M0.4 21.2h21.8q0 1.6-1.6 1.6h-18.6q-1.6 0-1.6-1.6z" fill="#b17d48"/><rect x="11.9" y="11.9" width="7.8" height="6.4" rx="0.7" fill="#e6f1f3"/><path d="M12.6 11.9h6.4q0.7 0 0.7 0.7v1.5h-7.8v-1.5q0-0.7 0.7-0.7z" fill="#49b4ef"/><rect x="11.9" y="13.4" width="7.8" height="0.8" fill="#8dd6f8"/><rect x="13.7" y="15.1" width="4.3" height="1.8" fill="#b9c9cc"/></svg><span class="t b" style="top:318.37px;left:99px;width:60px;text-align:right;font-size:17.4px;font-weight:bold;letter-spacing:0.15px">3</span><span class="t b" style="top:318.37px;font-size:17.4px;left:165.3px;font-weight:bold;letter-spacing:-0.372px;">КУСТ 1</span><div class="a" style="left:61px;top:354.4px;width:15px;height:1px;background:repeating-linear-gradient(90deg,#8a8a8a 0 1px,transparent 1px 3px)"></div><svg style="left:76.4px;top:343.3px" width="22.6" height="22.8" viewBox="0 0 22.6 22.8"><path d="M3.3 0.3h16q0.7 0 1.2 0.6l1.6 2q0.4 0.5 0.4 1.2v16.8q0 1.6-1.6 1.6h-19.2q-1.6 0-1.6-1.6v-16.8q0-0.7 0.4-1.2l1.6-2q0.5-0.6 1.2-0.6z" fill="#dba977"/><path d="M3.3 0.9h16l1.9 2.6q-1 2-9.9 2t-9.9-2z" fill="#f1c897"/><path d="M0.3 4.5l4.2 3.3v10.2l-4.2 3.2z" fill="#e0ad7b"/><path d="M22.3 4.5l-4.2 3.3v10.2l4.2 3.2z" fill="#d6a06c"/><rect x="4.5" y="7.8" width="13.6" height="10.2" fill="#c99a66"/><g fill="#a97a45"><rect x="4.7" y="7.8" width="1.1" height="10.2"/><rect x="7.7" y="7.8" width="1.1" height="10.2"/><rect x="10.7" y="7.8" width="1.1" height="10.2"/><rect x="13.7" y="7.8" width="1.1" height="10.2"/><rect x="16.7" y="7.8" width="1.1" height="10.2"/></g><rect x="4.5" y="7.8" width="13.6" height="1" fill="#b28350" opacity="0.6"/><path d="M0.3 20.3l4.2-2.3h13.6l4.2 2.3v0.9q0 1.6-1.6 1.6h-18.8q-1.6 0-1.6-1.6z" fill="#cf9c68"/><path d="M0.4 21.2h21.8q0 1.6-1.6 1.6h-18.6q-1.6 0-1.6-1.6z" fill="#b17d48"/><rect x="11.9" y="11.9" width="7.8" height="6.4" rx="0.7" fill="#e6f1f3"/><path d="M12.6 11.9h6.4q0.7 0 0.7 0.7v1.5h-7.8v-1.5q0-0.7 0.7-0.7z" fill="#49b4ef"/><rect x="11.9" y="13.4" width="7.8" height="0.8" fill="#8dd6f8"/><rect x="13.7" y="15.1" width="4.3" height="1.8" fill="#b9c9cc"/></svg><span class="t b" style="top:346.87px;left:99px;width:60px;text-align:right;font-size:17.4px;font-weight:bold;letter-spacing:0.15px">4</span><span class="t b" style="top:346.87px;font-size:17.4px;left:165.3px;font-weight:bold;letter-spacing:0.53px;">Куст 2</span><div class="a" style="left:61px;top:382.9px;width:15px;height:1px;background:repeating-linear-gradient(90deg,#8a8a8a 0 1px,transparent 1px 3px)"></div><svg style="left:76.4px;top:371.8px" width="22.6" height="22.8" viewBox="0 0 22.6 22.8"><path d="M3.3 0.3h16q0.7 0 1.2 0.6l1.6 2q0.4 0.5 0.4 1.2v16.8q0 1.6-1.6 1.6h-19.2q-1.6 0-1.6-1.6v-16.8q0-0.7 0.4-1.2l1.6-2q0.5-0.6 1.2-0.6z" fill="#dba977"/><path d="M3.3 0.9h16l1.9 2.6q-1 2-9.9 2t-9.9-2z" fill="#f1c897"/><path d="M0.3 4.5l4.2 3.3v10.2l-4.2 3.2z" fill="#e0ad7b"/><path d="M22.3 4.5l-4.2 3.3v10.2l4.2 3.2z" fill="#d6a06c"/><rect x="4.5" y="7.8" width="13.6" height="10.2" fill="#c99a66"/><g fill="#a97a45"><rect x="4.7" y="7.8" width="1.1" height="10.2"/><rect x="7.7" y="7.8" width="1.1" height="10.2"/><rect x="10.7" y="7.8" width="1.1" height="10.2"/><rect x="13.7" y="7.8" width="1.1" height="10.2"/><rect x="16.7" y="7.8" width="1.1" height="10.2"/></g><rect x="4.5" y="7.8" width="13.6" height="1" fill="#b28350" opacity="0.6"/><path d="M0.3 20.3l4.2-2.3h13.6l4.2 2.3v0.9q0 1.6-1.6 1.6h-18.8q-1.6 0-1.6-1.6z" fill="#cf9c68"/><path d="M0.4 21.2h21.8q0 1.6-1.6 1.6h-18.6q-1.6 0-1.6-1.6z" fill="#b17d48"/><rect x="11.9" y="11.9" width="7.8" height="6.4" rx="0.7" fill="#e6f1f3"/><path d="M12.6 11.9h6.4q0.7 0 0.7 0.7v1.5h-7.8v-1.5q0-0.7 0.7-0.7z" fill="#49b4ef"/><rect x="11.9" y="13.4" width="7.8" height="0.8" fill="#8dd6f8"/><rect x="13.7" y="15.1" width="4.3" height="1.8" fill="#b9c9cc"/></svg><span class="t b" style="top:375.37px;left:99px;width:60px;text-align:right;font-size:17.4px;font-weight:bold;letter-spacing:0.15px">5</span><span class="t b" style="top:375.37px;font-size:17.4px;left:165.3px;font-weight:bold;letter-spacing:-0.373px;">СК ДЛЯ КОЛЛЦЕНТРА</span><div class="a" style="left:61px;top:411.4px;width:15px;height:1px;background:repeating-linear-gradient(90deg,#8a8a8a 0 1px,transparent 1px 3px)"></div><svg style="left:76.4px;top:400.3px" width="22.6" height="22.8" viewBox="0 0 22.6 22.8"><path d="M3.3 0.3h16q0.7 0 1.2 0.6l1.6 2q0.4 0.5 0.4 1.2v16.8q0 1.6-1.6 1.6h-19.2q-1.6 0-1.6-1.6v-16.8q0-0.7 0.4-1.2l1.6-2q0.5-0.6 1.2-0.6z" fill="#dba977"/><path d="M3.3 0.9h16l1.9 2.6q-1 2-9.9 2t-9.9-2z" fill="#f1c897"/><path d="M0.3 4.5l4.2 3.3v10.2l-4.2 3.2z" fill="#e0ad7b"/><path d="M22.3 4.5l-4.2 3.3v10.2l4.2 3.2z" fill="#d6a06c"/><rect x="4.5" y="7.8" width="13.6" height="10.2" fill="#c99a66"/><g fill="#a97a45"><rect x="4.7" y="7.8" width="1.1" height="10.2"/><rect x="7.7" y="7.8" width="1.1" height="10.2"/><rect x="10.7" y="7.8" width="1.1" height="10.2"/><rect x="13.7" y="7.8" width="1.1" height="10.2"/><rect x="16.7" y="7.8" width="1.1" height="10.2"/></g><rect x="4.5" y="7.8" width="13.6" height="1" fill="#b28350" opacity="0.6"/><path d="M0.3 20.3l4.2-2.3h13.6l4.2 2.3v0.9q0 1.6-1.6 1.6h-18.8q-1.6 0-1.6-1.6z" fill="#cf9c68"/><path d="M0.4 21.2h21.8q0 1.6-1.6 1.6h-18.6q-1.6 0-1.6-1.6z" fill="#b17d48"/><rect x="11.9" y="11.9" width="7.8" height="6.4" rx="0.7" fill="#e6f1f3"/><path d="M12.6 11.9h6.4q0.7 0 0.7 0.7v1.5h-7.8v-1.5q0-0.7 0.7-0.7z" fill="#49b4ef"/><rect x="11.9" y="13.4" width="7.8" height="0.8" fill="#8dd6f8"/><rect x="13.7" y="15.1" width="4.3" height="1.8" fill="#b9c9cc"/></svg><span class="t b" style="top:403.87px;left:99px;width:60px;text-align:right;font-size:17.4px;font-weight:bold;letter-spacing:0.15px">11</span><span class="t b" style="top:403.87px;font-size:17.4px;left:165.3px;font-weight:bold;letter-spacing:0.054px;">КУСТ_5</span></div><div class="a" style="left:0px;top:1276px;width:518.5px;height:34px;background:#f0f0f0;border-top:1.5px solid #b4b4b4;border-bottom:1.5px solid #b9b9b9;border-right:1.5px solid #b4b4b4;"></div><div class="a" style="left:17px;top:1277px;width:1.2px;height:32px;background:#b4b4b4;"></div><div class="a" style="left:164px;top:1281px;width:352px;height:25.5px;background:#f0f0f0;border:1px solid #d9d9d9;border-left:1.5px solid #9f9f9f;border-top:1.5px solid #9f9f9f;"></div><span class="t b" style="top:1283.97px;font-size:17.4px;left:166.5px;font-weight:bold;letter-spacing:-0.329px;">Записей: 15</span><div class="a" style="left:558px;top:185px;width:1577px;height:54px;background:#f0f0f0;"></div><span class="t b" style="top:203.05px;font-size:18.9px;left:571.0px;font-weight:bold;letter-spacing:0.341px;">Перетягніть заголовок колонки сюди для угруповання з цього стовпцю</span><div class="a" style="left:558px;top:239px;width:1577px;height:28.5px;background:#fff;"></div><div class="a" style="left:574.5px;top:239px;width:1.5px;height:28.5px;background:#e6e6e6;"></div><div class="a" style="left:659.5px;top:239px;width:1.5px;height:28.5px;background:#e6e6e6;"></div><div class="a" style="left:691.5px;top:239px;width:1.5px;height:28.5px;background:#e6e6e6;"></div><div class="a" style="left:1301.5px;top:239px;width:1.5px;height:28.5px;background:#e6e6e6;"></div><div class="a" style="left:1420.0px;top:239px;width:1.5px;height:28.5px;background:#e6e6e6;"></div><div class="a" style="left:1606.5px;top:239px;width:1.5px;height:28.5px;background:#e6e6e6;"></div><div class="a" style="left:1767.0px;top:239px;width:1.5px;height:28.5px;background:#e6e6e6;"></div><div class="a" style="left:1906.5px;top:239px;width:1.5px;height:28.5px;background:#e6e6e6;"></div><div class="a" style="left:2070.0px;top:239px;width:1.5px;height:28.5px;background:#e6e6e6;"></div><svg style="left:561.5px;top:246px" width="11" height="15" viewBox="0 0 11 15"><g fill="#111"><rect x="1" y="0.5" width="1.5" height="1.3"/><rect x="3.2" y="0.5" width="7" height="1.3"/><rect x="0" y="3.3" width="1.5" height="1.3"/><rect x="3.2" y="3.3" width="7" height="1.3"/><rect x="1" y="6.1" width="1.5" height="1.3"/><rect x="3.2" y="6.1" width="7" height="1.3"/><rect x="0" y="8.899999999999999" width="1.5" height="1.3"/><rect x="3.2" y="8.899999999999999" width="7" height="1.3"/><rect x="1" y="11.7" width="1.5" height="1.3"/><rect x="3.2" y="11.7" width="7" height="1.3"/></g></svg><span class="t " style="top:244.15px;font-size:16.3px;left:580.0px;color:#1a1a1a;letter-spacing:-0.179px;">У матриці</span><span class="t " style="top:244.15px;font-size:16.3px;left:667.5px;color:#1a1a1a;letter-spacing:-1.067px;">ІД</span><span class="t " style="top:244.15px;font-size:16.3px;left:951.0px;color:#1a1a1a;letter-spacing:-0.458px;">Назва фірми</span><span class="t " style="top:244.15px;font-size:16.3px;left:1315.0px;color:#1a1a1a;letter-spacing:0.085px;">Абревіатура</span><span class="t " style="top:244.15px;font-size:16.3px;left:1425.5px;color:#1a1a1a;letter-spacing:0.086px;">Внутрішній штрих-код</span><span class="t " style="top:244.15px;font-size:16.3px;left:1654.5px;color:#1a1a1a;letter-spacing:-0.487px;">Є філією</span><span class="t " style="top:244.15px;font-size:16.3px;left:1790.0px;color:#1a1a1a;letter-spacing:-0.053px;">Повна назва</span><span class="t " style="top:244.15px;font-size:16.3px;left:1918.5px;color:#1a1a1a;letter-spacing:0.014px;">Юридична адреса</span><span class="t " style="top:244.15px;font-size:16.3px;left:2076px;color:#1a1a1a;letter-spacing:0.3px;width:59px;overflow:hidden;">Головне п</span><div class="a" style="left:558px;top:267.5px;width:1577px;height:982.5px;overflow:hidden;background:#fff"><div class="a" style="left:0px;top:0px;width:17px;height:982.5px;background:#f0f0f0;"></div><div class="a" style="left:16.7px;top:0px;width:1.5px;height:982.5px;background:#a0a0a0;"></div><div class="a" style="left:101.7px;top:0px;width:1.5px;height:982.5px;background:#a0a0a0;"></div><div class="a" style="left:133.7px;top:0px;width:1.5px;height:982.5px;background:#a0a0a0;"></div><div class="a" style="left:743.7px;top:0px;width:1.5px;height:982.5px;background:#a0a0a0;"></div><div class="a" style="left:862.2px;top:0px;width:1.5px;height:982.5px;background:#a0a0a0;"></div><div class="a" style="left:1048.7px;top:0px;width:1.5px;height:982.5px;background:#a0a0a0;"></div><div class="a" style="left:1209.2px;top:0px;width:1.5px;height:982.5px;background:#a0a0a0;"></div><div class="a" style="left:1348.7px;top:0px;width:1.5px;height:982.5px;background:#a0a0a0;"></div><div class="a" style="left:1512.2px;top:0px;width:1.5px;height:982.5px;background:#a0a0a0;"></div><div class="a" style="left:0px;top:27.3px;width:1577px;height:1.5px;background:#a8a8a8;"></div><svg style="left:49.5px;top:3.3px" width="19.5" height="19" viewBox="0 0 20 20" preserveAspectRatio="none"><rect x="0.75" y="0.75" width="18.5" height="18.5" fill="#fff" stroke="#333" stroke-width="1.5"/></svg><svg style="left:1119px;top:3.3px" width="19.5" height="19" viewBox="0 0 20 20" preserveAspectRatio="none"><rect x="0.75" y="0.75" width="18.5" height="18.5" fill="#fff" stroke="#333" stroke-width="1.5"/><path d="M3.5 10.5l4.5 4.5 8.5-10.5" fill="none" stroke="#3a3a3a" stroke-width="1.4"/></svg><span class="t b" style="top:4.61px;font-size:17px;left:110px;font-weight:bold;letter-spacing:-0.3px;">7...</span><span class="t b" style="top:4.61px;font-size:17px;left:138.0px;font-weight:bold;letter-spacing:0.255px;">Смірнова Тетяна Юрьївна</span><span class="t b" style="top:4.61px;font-size:17px;left:867px;font-weight:bold;letter-spacing:0.8px;">5029</span><span class="t b" style="top:4.61px;font-size:17px;left:1213.5px;font-weight:bold;letter-spacing:0.55px;width:134px;overflow:hidden;">Аптека №83 ...</span><div class="a" style="left:0px;top:55.8px;width:1577px;height:1.5px;background:#a8a8a8;"></div><svg style="left:49.5px;top:31.8px" width="19.5" height="19" viewBox="0 0 20 20" preserveAspectRatio="none"><rect x="0.75" y="0.75" width="18.5" height="18.5" fill="#fff" stroke="#333" stroke-width="1.5"/></svg><svg style="left:1119px;top:31.8px" width="19.5" height="19" viewBox="0 0 20 20" preserveAspectRatio="none"><rect x="0.75" y="0.75" width="18.5" height="18.5" fill="#fff" stroke="#333" stroke-width="1.5"/><path d="M3.5 10.5l4.5 4.5 8.5-10.5" fill="none" stroke="#3a3a3a" stroke-width="1.4"/></svg><span class="t b" style="top:33.11px;font-size:17px;left:110px;font-weight:bold;letter-spacing:-0.3px;">2...</span><span class="t b" style="top:33.11px;font-size:17px;left:138.0px;font-weight:bold;letter-spacing:0.42px;">Апт №003 пгт.Барышевка, ул.Киевский шлях,126а</span><span class="t b" style="top:33.11px;font-size:17px;left:1213.5px;font-weight:bold;letter-spacing:0.55px;width:134px;overflow:hidden;">Апт №003 пг...</span><span class="t b" style="top:33.11px;font-size:17px;left:1517px;font-weight:bold;letter-spacing:0.32px;width:60px;overflow:hidden;">Апт №003</span><div class="a" style="left:0px;top:84.3px;width:1577px;height:1.5px;background:#a8a8a8;"></div><svg style="left:49.5px;top:60.3px" width="19.5" height="19" viewBox="0 0 20 20" preserveAspectRatio="none"><rect x="0.75" y="0.75" width="18.5" height="18.5" fill="#fff" stroke="#333" stroke-width="1.5"/></svg><svg style="left:1119px;top:60.3px" width="19.5" height="19" viewBox="0 0 20 20" preserveAspectRatio="none"><rect x="0.75" y="0.75" width="18.5" height="18.5" fill="#fff" stroke="#333" stroke-width="1.5"/><path d="M3.5 10.5l4.5 4.5 8.5-10.5" fill="none" stroke="#3a3a3a" stroke-width="1.4"/></svg><span class="t b" style="top:61.61px;font-size:17px;left:110px;font-weight:bold;letter-spacing:-0.3px;">7...</span><span class="t b" style="top:61.61px;font-size:17px;left:138.0px;font-weight:bold;letter-spacing:0.599px;">Апт №006 г.Киев, ул.Саксаганского,39-А</span><span class="t b" style="top:61.61px;font-size:17px;left:748.5px;font-weight:bold;letter-spacing:0.7px;">124545</span><span class="t b" style="top:61.61px;font-size:17px;left:867px;font-weight:bold;letter-spacing:0.8px;">3805</span><span class="t b" style="top:61.61px;font-size:17px;left:1213.5px;font-weight:bold;letter-spacing:0.55px;width:134px;overflow:hidden;">А6 г.Киев ул....</span><div class="a" style="left:0px;top:112.8px;width:1577px;height:1.5px;background:#a8a8a8;"></div><svg style="left:49.5px;top:88.8px" width="19.5" height="19" viewBox="0 0 20 20" preserveAspectRatio="none"><rect x="0.75" y="0.75" width="18.5" height="18.5" fill="#fff" stroke="#333" stroke-width="1.5"/></svg><svg style="left:1119px;top:88.8px" width="19.5" height="19" viewBox="0 0 20 20" preserveAspectRatio="none"><rect x="0.75" y="0.75" width="18.5" height="18.5" fill="#fff" stroke="#333" stroke-width="1.5"/><path d="M3.5 10.5l4.5 4.5 8.5-10.5" fill="none" stroke="#3a3a3a" stroke-width="1.4"/></svg><span class="t b" style="top:90.11px;font-size:17px;left:110px;font-weight:bold;letter-spacing:0.32px;">81</span><span class="t b" style="top:90.11px;font-size:17px;left:138.0px;font-weight:bold;letter-spacing:0.439px;">Апт №010 г.Березань, ул. Шевченковский шлях,156</span><span class="t b" style="top:90.11px;font-size:17px;left:748.5px;font-weight:bold;letter-spacing:0.62px;">31268</span><span class="t b" style="top:90.11px;font-size:17px;left:867px;font-weight:bold;letter-spacing:0.8px;">5241</span><span class="t b" style="top:90.11px;font-size:17px;left:1213.5px;font-weight:bold;letter-spacing:0.55px;width:134px;overflow:hidden;">Апт №010 г.Б...</span><span class="t b" style="top:90.11px;font-size:17px;left:1517px;font-weight:bold;letter-spacing:0.32px;width:60px;overflow:hidden;">ТОВ</span><div class="a" style="left:0px;top:141.3px;width:1577px;height:1.5px;background:#a8a8a8;"></div><svg style="left:49.5px;top:117.3px" width="19.5" height="19" viewBox="0 0 20 20" preserveAspectRatio="none"><rect x="0.75" y="0.75" width="18.5" height="18.5" fill="#fff" stroke="#333" stroke-width="1.5"/></svg><svg style="left:1119px;top:117.3px" width="19.5" height="19" viewBox="0 0 20 20" preserveAspectRatio="none"><rect x="0.75" y="0.75" width="18.5" height="18.5" fill="#fff" stroke="#333" stroke-width="1.5"/><path d="M3.5 10.5l4.5 4.5 8.5-10.5" fill="none" stroke="#3a3a3a" stroke-width="1.4"/></svg><span class="t b" style="top:118.61px;font-size:17px;left:110px;font-weight:bold;letter-spacing:-0.3px;">7...</span><span class="t b" style="top:118.61px;font-size:17px;left:138.0px;font-weight:bold;letter-spacing:0.713px;">Апт №011 г.Киев, пр-т.Победы,142а</span><span class="t b" style="top:118.61px;font-size:17px;left:748.5px;font-weight:bold;letter-spacing:0.62px;">32495</span><span class="t b" style="top:118.61px;font-size:17px;left:867px;font-weight:bold;letter-spacing:0.8px;">5251</span><span class="t b" style="top:118.61px;font-size:17px;left:1213.5px;font-weight:bold;letter-spacing:0.55px;width:134px;overflow:hidden;">Апт №011 г.К...</span><span class="t b" style="top:118.61px;font-size:17px;left:1517px;font-weight:bold;letter-spacing:0.32px;width:60px;overflow:hidden;">ТОВ</span><div class="a" style="left:0px;top:169.8px;width:1577px;height:1.5px;background:#a8a8a8;"></div><svg style="left:49.5px;top:145.8px" width="19.5" height="19" viewBox="0 0 20 20" preserveAspectRatio="none"><rect x="0.75" y="0.75" width="18.5" height="18.5" fill="#fff" stroke="#333" stroke-width="1.5"/></svg><svg style="left:1119px;top:145.8px" width="19.5" height="19" viewBox="0 0 20 20" preserveAspectRatio="none"><rect x="0.75" y="0.75" width="18.5" height="18.5" fill="#fff" stroke="#333" stroke-width="1.5"/><path d="M3.5 10.5l4.5 4.5 8.5-10.5" fill="none" stroke="#3a3a3a" stroke-width="1.4"/></svg><span class="t b" style="top:147.11px;font-size:17px;left:110px;font-weight:bold;letter-spacing:-0.3px;">7...</span><span class="t b" style="top:147.11px;font-size:17px;left:138.0px;font-weight:bold;letter-spacing:0.657px;">Апт №012 г.Киев, пр-т.Воздухофлотский,50/2</span><span class="t b" style="top:147.11px;font-size:17px;left:748.5px;font-weight:bold;letter-spacing:0.62px;">32468</span><span class="t b" style="top:147.11px;font-size:17px;left:867px;font-weight:bold;letter-spacing:0.8px;">5225</span><span class="t b" style="top:147.11px;font-size:17px;left:1213.5px;font-weight:bold;letter-spacing:0.55px;width:134px;overflow:hidden;">Апт №012 г.К...</span><div class="a" style="left:0px;top:198.3px;width:1577px;height:1.5px;background:#a8a8a8;"></div><svg style="left:49.5px;top:174.3px" width="19.5" height="19" viewBox="0 0 20 20" preserveAspectRatio="none"><rect x="0.75" y="0.75" width="18.5" height="18.5" fill="#fff" stroke="#333" stroke-width="1.5"/></svg><svg style="left:1119px;top:174.3px" width="19.5" height="19" viewBox="0 0 20 20" preserveAspectRatio="none"><rect x="0.75" y="0.75" width="18.5" height="18.5" fill="#fff" stroke="#333" stroke-width="1.5"/><path d="M3.5 10.5l4.5 4.5 8.5-10.5" fill="none" stroke="#3a3a3a" stroke-width="1.4"/></svg><span class="t b" style="top:175.61px;font-size:17px;left:110px;font-weight:bold;letter-spacing:-0.3px;">7...</span><span class="t b" style="top:175.61px;font-size:17px;left:138.0px;font-weight:bold;letter-spacing:0.663px;">Апт №015 г.Киев, б-р.Л.Украинки,19/16</span><span class="t b" style="top:175.61px;font-size:17px;left:748.5px;font-weight:bold;letter-spacing:0.62px;">34435</span><span class="t b" style="top:175.61px;font-size:17px;left:867px;font-weight:bold;letter-spacing:0.8px;">5226</span><span class="t b" style="top:175.61px;font-size:17px;left:1213.5px;font-weight:bold;letter-spacing:0.55px;width:134px;overflow:hidden;">Апт №015 г.К...</span><div class="a" style="left:0px;top:226.8px;width:1577px;height:1.5px;background:#a8a8a8;"></div><svg style="left:49.5px;top:202.8px" width="19.5" height="19" viewBox="0 0 20 20" preserveAspectRatio="none"><rect x="0.75" y="0.75" width="18.5" height="18.5" fill="#fff" stroke="#333" stroke-width="1.5"/></svg><svg style="left:1119px;top:202.8px" width="19.5" height="19" viewBox="0 0 20 20" preserveAspectRatio="none"><rect x="0.75" y="0.75" width="18.5" height="18.5" fill="#fff" stroke="#333" stroke-width="1.5"/><path d="M3.5 10.5l4.5 4.5 8.5-10.5" fill="none" stroke="#3a3a3a" stroke-width="1.4"/></svg><span class="t b" style="top:204.11px;font-size:17px;left:110px;font-weight:bold;letter-spacing:-0.3px;">7...</span><span class="t b" style="top:204.11px;font-size:17px;left:138.0px;font-weight:bold;letter-spacing:0.524px;">Апт №022 г.Киев, б-р.Л.Украинки,34</span><span class="t b" style="top:204.11px;font-size:17px;left:748.5px;font-weight:bold;letter-spacing:0.62px;">38131</span><span class="t b" style="top:204.11px;font-size:17px;left:867px;font-weight:bold;letter-spacing:0.8px;">5227</span><span class="t b" style="top:204.11px;font-size:17px;left:1213.5px;font-weight:bold;letter-spacing:0.55px;width:134px;overflow:hidden;">Апт №022 г.К...</span><span class="t b" style="top:204.11px;font-size:17px;left:1517px;font-weight:bold;letter-spacing:0.32px;width:60px;overflow:hidden;">ТМН ТАС</span><div class="a" style="left:0px;top:255.3px;width:1577px;height:1.5px;background:#a8a8a8;"></div><svg style="left:49.5px;top:231.3px" width="19.5" height="19" viewBox="0 0 20 20" preserveAspectRatio="none"><rect x="0.75" y="0.75" width="18.5" height="18.5" fill="#fff" stroke="#333" stroke-width="1.5"/></svg><svg style="left:1119px;top:231.3px" width="19.5" height="19" viewBox="0 0 20 20" preserveAspectRatio="none"><rect x="0.75" y="0.75" width="18.5" height="18.5" fill="#fff" stroke="#333" stroke-width="1.5"/><path d="M3.5 10.5l4.5 4.5 8.5-10.5" fill="none" stroke="#3a3a3a" stroke-width="1.4"/></svg><span class="t b" style="top:232.61px;font-size:17px;left:110px;font-weight:bold;letter-spacing:-0.3px;">7...</span><span class="t b" style="top:232.61px;font-size:17px;left:138.0px;font-weight:bold;letter-spacing:0.648px;">Апт №024 г.Киев, ул.Жилянская,146/13</span><span class="t b" style="top:232.61px;font-size:17px;left:867px;font-weight:bold;letter-spacing:0.8px;">3623</span><span class="t b" style="top:232.61px;font-size:17px;left:1213.5px;font-weight:bold;letter-spacing:0.55px;width:134px;overflow:hidden;">А№24 г.Киев ...</span><div class="a" style="left:0px;top:283.8px;width:1577px;height:1.5px;background:#a8a8a8;"></div><svg style="left:49.5px;top:259.8px" width="19.5" height="19" viewBox="0 0 20 20" preserveAspectRatio="none"><rect x="0.75" y="0.75" width="18.5" height="18.5" fill="#fff" stroke="#333" stroke-width="1.5"/></svg><svg style="left:1119px;top:259.8px" width="19.5" height="19" viewBox="0 0 20 20" preserveAspectRatio="none"><rect x="0.75" y="0.75" width="18.5" height="18.5" fill="#fff" stroke="#333" stroke-width="1.5"/><path d="M3.5 10.5l4.5 4.5 8.5-10.5" fill="none" stroke="#3a3a3a" stroke-width="1.4"/></svg><span class="t b" style="top:261.11px;font-size:17px;left:110px;font-weight:bold;letter-spacing:-0.3px;">7...</span><span class="t b" style="top:261.11px;font-size:17px;left:138.0px;font-weight:bold;letter-spacing:0.744px;">Апт №027 г.Киев, ул.Урловская,11/44</span><span class="t b" style="top:261.11px;font-size:17px;left:748.5px;font-weight:bold;letter-spacing:0.62px;">39450</span><span class="t b" style="top:261.11px;font-size:17px;left:867px;font-weight:bold;letter-spacing:0.8px;">5252</span><span class="t b" style="top:261.11px;font-size:17px;left:1213.5px;font-weight:bold;letter-spacing:0.55px;width:134px;overflow:hidden;">Апт №027 г.К...</span><div class="a" style="left:0px;top:312.3px;width:1577px;height:1.5px;background:#a8a8a8;"></div><svg style="left:49.5px;top:288.3px" width="19.5" height="19" viewBox="0 0 20 20" preserveAspectRatio="none"><rect x="0.75" y="0.75" width="18.5" height="18.5" fill="#fff" stroke="#333" stroke-width="1.5"/></svg><svg style="left:1119px;top:288.3px" width="19.5" height="19" viewBox="0 0 20 20" preserveAspectRatio="none"><rect x="0.75" y="0.75" width="18.5" height="18.5" fill="#fff" stroke="#333" stroke-width="1.5"/><path d="M3.5 10.5l4.5 4.5 8.5-10.5" fill="none" stroke="#3a3a3a" stroke-width="1.4"/></svg><span class="t b" style="top:289.61px;font-size:17px;left:110px;font-weight:bold;letter-spacing:-0.3px;">7...</span><span class="t b" style="top:289.61px;font-size:17px;left:138.0px;font-weight:bold;letter-spacing:0.559px;">Апт №028 г.Киев, ул.Горького,47а</span><span class="t b" style="top:289.61px;font-size:17px;left:748.5px;font-weight:bold;letter-spacing:0.62px;">39103</span><span class="t b" style="top:289.61px;font-size:17px;left:867px;font-weight:bold;letter-spacing:0.8px;">3624</span><span class="t b" style="top:289.61px;font-size:17px;left:1213.5px;font-weight:bold;letter-spacing:0.55px;width:134px;overflow:hidden;">Апт №028 г.К...</span><div class="a" style="left:0px;top:340.8px;width:1577px;height:1.5px;background:#a8a8a8;"></div><svg style="left:49.5px;top:316.8px" width="19.5" height="19" viewBox="0 0 20 20" preserveAspectRatio="none"><rect x="0.75" y="0.75" width="18.5" height="18.5" fill="#fff" stroke="#333" stroke-width="1.5"/></svg><svg style="left:1119px;top:316.8px" width="19.5" height="19" viewBox="0 0 20 20" preserveAspectRatio="none"><rect x="0.75" y="0.75" width="18.5" height="18.5" fill="#fff" stroke="#333" stroke-width="1.5"/><path d="M3.5 10.5l4.5 4.5 8.5-10.5" fill="none" stroke="#3a3a3a" stroke-width="1.4"/></svg><span class="t b" style="top:318.11px;font-size:17px;left:110px;font-weight:bold;letter-spacing:-0.3px;">7...</span><span class="t b" style="top:318.11px;font-size:17px;left:138.0px;font-weight:bold;letter-spacing:0.395px;">Апт №032 г.Яготин, ул.Независимости,71</span><span class="t b" style="top:318.11px;font-size:17px;left:748.5px;font-weight:bold;letter-spacing:0.62px;">39520</span><span class="t b" style="top:318.11px;font-size:17px;left:867px;font-weight:bold;letter-spacing:0.8px;">5285</span><span class="t b" style="top:318.11px;font-size:17px;left:1213.5px;font-weight:bold;letter-spacing:0.55px;width:134px;overflow:hidden;">Апт №032 г....</span><div class="a" style="left:0px;top:369.3px;width:1577px;height:1.5px;background:#a8a8a8;"></div><svg style="left:49.5px;top:345.3px" width="19.5" height="19" viewBox="0 0 20 20" preserveAspectRatio="none"><rect x="0.75" y="0.75" width="18.5" height="18.5" fill="#fff" stroke="#333" stroke-width="1.5"/></svg><svg style="left:1119px;top:345.3px" width="19.5" height="19" viewBox="0 0 20 20" preserveAspectRatio="none"><rect x="0.75" y="0.75" width="18.5" height="18.5" fill="#fff" stroke="#333" stroke-width="1.5"/><path d="M3.5 10.5l4.5 4.5 8.5-10.5" fill="none" stroke="#3a3a3a" stroke-width="1.4"/></svg><span class="t b" style="top:346.61px;font-size:17px;left:110px;font-weight:bold;letter-spacing:-0.3px;">7...</span><span class="t b" style="top:346.61px;font-size:17px;left:138.0px;font-weight:bold;letter-spacing:0.605px;">Апт №033 г.Киев, ул.Институтская,16</span><span class="t b" style="top:346.61px;font-size:17px;left:748.5px;font-weight:bold;letter-spacing:0.62px;">44447</span><span class="t b" style="top:346.61px;font-size:17px;left:867px;font-weight:bold;letter-spacing:0.8px;">5229</span><span class="t b" style="top:346.61px;font-size:17px;left:1213.5px;font-weight:bold;letter-spacing:0.55px;width:134px;overflow:hidden;">Апт №033 г.К...</span><div class="a" style="left:0px;top:397.8px;width:1577px;height:1.5px;background:#a8a8a8;"></div><svg style="left:49.5px;top:373.8px" width="19.5" height="19" viewBox="0 0 20 20" preserveAspectRatio="none"><rect x="0.75" y="0.75" width="18.5" height="18.5" fill="#fff" stroke="#333" stroke-width="1.5"/></svg><svg style="left:1119px;top:373.8px" width="19.5" height="19" viewBox="0 0 20 20" preserveAspectRatio="none"><rect x="0.75" y="0.75" width="18.5" height="18.5" fill="#fff" stroke="#333" stroke-width="1.5"/><path d="M3.5 10.5l4.5 4.5 8.5-10.5" fill="none" stroke="#3a3a3a" stroke-width="1.4"/></svg><span class="t b" style="top:375.11px;font-size:17px;left:110px;font-weight:bold;letter-spacing:-0.3px;">7...</span><span class="t b" style="top:375.11px;font-size:17px;left:138.0px;font-weight:bold;letter-spacing:0.547px;">Апт №034 г.Киев, ул.Л.Толстого,5</span><span class="t b" style="top:375.11px;font-size:17px;left:748.5px;font-weight:bold;letter-spacing:0.62px;">44870</span><span class="t b" style="top:375.11px;font-size:17px;left:867px;font-weight:bold;letter-spacing:0.8px;">5230</span><span class="t b" style="top:375.11px;font-size:17px;left:1213.5px;font-weight:bold;letter-spacing:0.55px;width:134px;overflow:hidden;">Апт №034 г.К...</span><div class="a" style="left:0px;top:426.3px;width:1577px;height:1.5px;background:#a8a8a8;"></div><svg style="left:49.5px;top:402.3px" width="19.5" height="19" viewBox="0 0 20 20" preserveAspectRatio="none"><rect x="0.75" y="0.75" width="18.5" height="18.5" fill="#fff" stroke="#333" stroke-width="1.5"/></svg><svg style="left:1119px;top:402.3px" width="19.5" height="19" viewBox="0 0 20 20" preserveAspectRatio="none"><rect x="0.75" y="0.75" width="18.5" height="18.5" fill="#fff" stroke="#333" stroke-width="1.5"/><path d="M3.5 10.5l4.5 4.5 8.5-10.5" fill="none" stroke="#3a3a3a" stroke-width="1.4"/></svg><span class="t b" style="top:403.61px;font-size:17px;left:110px;font-weight:bold;letter-spacing:-0.3px;">7...</span><span class="t b" style="top:403.61px;font-size:17px;left:138.0px;font-weight:bold;letter-spacing:0.431px;">Апт №035 г.Вишневый, ул.Октябрьская,16</span><span class="t b" style="top:403.61px;font-size:17px;left:867px;font-weight:bold;letter-spacing:0.8px;">3976</span><span class="t b" style="top:403.61px;font-size:17px;left:1213.5px;font-weight:bold;letter-spacing:0.55px;width:134px;overflow:hidden;">А№35 г.Вишн...</span><div class="a" style="left:0px;top:454.8px;width:1577px;height:1.5px;background:#a8a8a8;"></div><svg style="left:49.5px;top:430.8px" width="19.5" height="19" viewBox="0 0 20 20" preserveAspectRatio="none"><rect x="0.75" y="0.75" width="18.5" height="18.5" fill="#fff" stroke="#333" stroke-width="1.5"/></svg><svg style="left:1119px;top:430.8px" width="19.5" height="19" viewBox="0 0 20 20" preserveAspectRatio="none"><rect x="0.75" y="0.75" width="18.5" height="18.5" fill="#fff" stroke="#333" stroke-width="1.5"/><path d="M3.5 10.5l4.5 4.5 8.5-10.5" fill="none" stroke="#3a3a3a" stroke-width="1.4"/></svg><span class="t b" style="top:432.11px;font-size:17px;left:110px;font-weight:bold;letter-spacing:-0.3px;">7...</span><span class="t b" style="top:432.11px;font-size:17px;left:138.0px;font-weight:bold;letter-spacing:0.434px;">Апт №036 г.Киев, ул.Соломенская,33</span><span class="t b" style="top:432.11px;font-size:17px;left:748.5px;font-weight:bold;letter-spacing:0.62px;">49029</span><span class="t b" style="top:432.11px;font-size:17px;left:867px;font-weight:bold;letter-spacing:0.8px;">5253</span><span class="t b" style="top:432.11px;font-size:17px;left:1213.5px;font-weight:bold;letter-spacing:0.55px;width:134px;overflow:hidden;">Апт №036 г.К...</span><div class="a" style="left:0px;top:483.3px;width:1577px;height:1.5px;background:#a8a8a8;"></div><svg style="left:49.5px;top:459.3px" width="19.5" height="19" viewBox="0 0 20 20" preserveAspectRatio="none"><rect x="0.75" y="0.75" width="18.5" height="18.5" fill="#fff" stroke="#333" stroke-width="1.5"/></svg><svg style="left:1119px;top:459.3px" width="19.5" height="19" viewBox="0 0 20 20" preserveAspectRatio="none"><rect x="0.75" y="0.75" width="18.5" height="18.5" fill="#fff" stroke="#333" stroke-width="1.5"/><path d="M3.5 10.5l4.5 4.5 8.5-10.5" fill="none" stroke="#3a3a3a" stroke-width="1.4"/></svg><span class="t b" style="top:460.61px;font-size:17px;left:110px;font-weight:bold;letter-spacing:-0.3px;">7...</span><span class="t b" style="top:460.61px;font-size:17px;left:138.0px;font-weight:bold;letter-spacing:0.478px;">Апт №040 г.Киев, ул.Нижний Вал,37/20</span><span class="t b" style="top:460.61px;font-size:17px;left:748.5px;font-weight:bold;letter-spacing:0.62px;">51273</span><span class="t b" style="top:460.61px;font-size:17px;left:867px;font-weight:bold;letter-spacing:0.8px;">5254</span><span class="t b" style="top:460.61px;font-size:17px;left:1213.5px;font-weight:bold;letter-spacing:0.55px;width:134px;overflow:hidden;">Апт №040 г.К...</span><div class="a" style="left:0px;top:511.8px;width:1577px;height:1.5px;background:#a8a8a8;"></div><svg style="left:49.5px;top:487.8px" width="19.5" height="19" viewBox="0 0 20 20" preserveAspectRatio="none"><rect x="0.75" y="0.75" width="18.5" height="18.5" fill="#fff" stroke="#333" stroke-width="1.5"/></svg><svg style="left:1119px;top:487.8px" width="19.5" height="19" viewBox="0 0 20 20" preserveAspectRatio="none"><rect x="0.75" y="0.75" width="18.5" height="18.5" fill="#fff" stroke="#333" stroke-width="1.5"/><path d="M3.5 10.5l4.5 4.5 8.5-10.5" fill="none" stroke="#3a3a3a" stroke-width="1.4"/></svg><span class="t b" style="top:489.11px;font-size:17px;left:110px;font-weight:bold;letter-spacing:-0.3px;">7...</span><span class="t b" style="top:489.11px;font-size:17px;left:138.0px;font-weight:bold;letter-spacing:0.518px;">Апт №042 г.Киев, ул.Старовокзальная,26</span><span class="t b" style="top:489.11px;font-size:17px;left:867px;font-weight:bold;letter-spacing:0.8px;">4165</span><span class="t b" style="top:489.11px;font-size:17px;left:1213.5px;font-weight:bold;letter-spacing:0.55px;width:134px;overflow:hidden;">А№42 г.Киев ...</span><div class="a" style="left:0px;top:540.3px;width:1577px;height:1.5px;background:#a8a8a8;"></div><svg style="left:49.5px;top:516.3px" width="19.5" height="19" viewBox="0 0 20 20" preserveAspectRatio="none"><rect x="0.75" y="0.75" width="18.5" height="18.5" fill="#fff" stroke="#333" stroke-width="1.5"/></svg><svg style="left:1119px;top:516.3px" width="19.5" height="19" viewBox="0 0 20 20" preserveAspectRatio="none"><rect x="0.75" y="0.75" width="18.5" height="18.5" fill="#fff" stroke="#333" stroke-width="1.5"/><path d="M3.5 10.5l4.5 4.5 8.5-10.5" fill="none" stroke="#3a3a3a" stroke-width="1.4"/></svg><span class="t b" style="top:517.61px;font-size:17px;left:110px;font-weight:bold;letter-spacing:-0.3px;">7...</span><span class="t b" style="top:517.61px;font-size:17px;left:138.0px;font-weight:bold;letter-spacing:0.486px;">Апт №046 г.Бровары, ул.Гагарина,14</span><span class="t b" style="top:517.61px;font-size:17px;left:748.5px;font-weight:bold;letter-spacing:0.62px;">54289</span><span class="t b" style="top:517.61px;font-size:17px;left:867px;font-weight:bold;letter-spacing:0.8px;">5232</span><span class="t b" style="top:517.61px;font-size:17px;left:1213.5px;font-weight:bold;letter-spacing:0.55px;width:134px;overflow:hidden;">Апт №046 г.Б...</span><div class="a" style="left:0px;top:568.8px;width:1577px;height:1.5px;background:#a8a8a8;"></div><svg style="left:49.5px;top:544.8px" width="19.5" height="19" viewBox="0 0 20 20" preserveAspectRatio="none"><rect x="0.75" y="0.75" width="18.5" height="18.5" fill="#fff" stroke="#333" stroke-width="1.5"/></svg><svg style="left:1119px;top:544.8px" width="19.5" height="19" viewBox="0 0 20 20" preserveAspectRatio="none"><rect x="0.75" y="0.75" width="18.5" height="18.5" fill="#fff" stroke="#333" stroke-width="1.5"/><path d="M3.5 10.5l4.5 4.5 8.5-10.5" fill="none" stroke="#3a3a3a" stroke-width="1.4"/></svg><span class="t b" style="top:546.11px;font-size:17px;left:110px;font-weight:bold;letter-spacing:-0.3px;">7...</span><span class="t b" style="top:546.11px;font-size:17px;left:138.0px;font-weight:bold;letter-spacing:0.639px;">Апт №048 г.Киев, ул.Березняковская,36ж</span><span class="t b" style="top:546.11px;font-size:17px;left:748.5px;font-weight:bold;letter-spacing:0.62px;">55075</span><span class="t b" style="top:546.11px;font-size:17px;left:867px;font-weight:bold;letter-spacing:0.8px;">5256</span><span class="t b" style="top:546.11px;font-size:17px;left:1213.5px;font-weight:bold;letter-spacing:0.55px;width:134px;overflow:hidden;">Апт №048 г.К...</span><div class="a" style="left:0px;top:597.3px;width:1577px;height:1.5px;background:#a8a8a8;"></div><svg style="left:49.5px;top:573.3px" width="19.5" height="19" viewBox="0 0 20 20" preserveAspectRatio="none"><rect x="0.75" y="0.75" width="18.5" height="18.5" fill="#fff" stroke="#333" stroke-width="1.5"/></svg><svg style="left:1119px;top:573.3px" width="19.5" height="19" viewBox="0 0 20 20" preserveAspectRatio="none"><rect x="0.75" y="0.75" width="18.5" height="18.5" fill="#fff" stroke="#333" stroke-width="1.5"/><path d="M3.5 10.5l4.5 4.5 8.5-10.5" fill="none" stroke="#3a3a3a" stroke-width="1.4"/></svg><span class="t b" style="top:574.61px;font-size:17px;left:110px;font-weight:bold;letter-spacing:-0.3px;">7...</span><span class="t b" style="top:574.61px;font-size:17px;left:138.0px;font-weight:bold;letter-spacing:0.471px;">Апт №051 г.Киев, ул.Р.Роллана,7а</span><span class="t b" style="top:574.61px;font-size:17px;left:748.5px;font-weight:bold;letter-spacing:0.62px;">57998</span><span class="t b" style="top:574.61px;font-size:17px;left:867px;font-weight:bold;letter-spacing:0.8px;">4436</span><span class="t b" style="top:574.61px;font-size:17px;left:1213.5px;font-weight:bold;letter-spacing:0.55px;width:134px;overflow:hidden;">Апт №051 г.К...</span><div class="a" style="left:0px;top:625.8px;width:1577px;height:1.5px;background:#a8a8a8;"></div><svg style="left:49.5px;top:601.8px" width="19.5" height="19" viewBox="0 0 20 20" preserveAspectRatio="none"><rect x="0.75" y="0.75" width="18.5" height="18.5" fill="#fff" stroke="#333" stroke-width="1.5"/></svg><svg style="left:1119px;top:601.8px" width="19.5" height="19" viewBox="0 0 20 20" preserveAspectRatio="none"><rect x="0.75" y="0.75" width="18.5" height="18.5" fill="#fff" stroke="#333" stroke-width="1.5"/><path d="M3.5 10.5l4.5 4.5 8.5-10.5" fill="none" stroke="#3a3a3a" stroke-width="1.4"/></svg><span class="t b" style="top:603.11px;font-size:17px;left:110px;font-weight:bold;letter-spacing:-0.3px;">7...</span><span class="t b" style="top:603.11px;font-size:17px;left:138.0px;font-weight:bold;letter-spacing:0.576px;">Апт №059 г.Киев,ул.Мазепы,9</span><span class="t b" style="top:603.11px;font-size:17px;left:748.5px;font-weight:bold;letter-spacing:0.62px;">60518</span><span class="t b" style="top:603.11px;font-size:17px;left:867px;font-weight:bold;letter-spacing:0.8px;">5258</span><span class="t b" style="top:603.11px;font-size:17px;left:1213.5px;font-weight:bold;letter-spacing:0.55px;width:134px;overflow:hidden;">Апт №059 г.К...</span><div class="a" style="left:0px;top:654.3px;width:1577px;height:1.5px;background:#a8a8a8;"></div><svg style="left:49.5px;top:630.3px" width="19.5" height="19" viewBox="0 0 20 20" preserveAspectRatio="none"><rect x="0.75" y="0.75" width="18.5" height="18.5" fill="#fff" stroke="#333" stroke-width="1.5"/></svg><svg style="left:1119px;top:630.3px" width="19.5" height="19" viewBox="0 0 20 20" preserveAspectRatio="none"><rect x="0.75" y="0.75" width="18.5" height="18.5" fill="#fff" stroke="#333" stroke-width="1.5"/><path d="M3.5 10.5l4.5 4.5 8.5-10.5" fill="none" stroke="#3a3a3a" stroke-width="1.4"/></svg><span class="t b" style="top:631.61px;font-size:17px;left:110px;font-weight:bold;letter-spacing:-0.3px;">7...</span><span class="t b" style="top:631.61px;font-size:17px;left:138.0px;font-weight:bold;letter-spacing:0.82px;">Апт №060 г.Киев, пр-т.Победы,49/2</span><span class="t b" style="top:631.61px;font-size:17px;left:748.5px;font-weight:bold;letter-spacing:0.62px;">60362</span><span class="t b" style="top:631.61px;font-size:17px;left:867px;font-weight:bold;letter-spacing:0.8px;">5259</span><span class="t b" style="top:631.61px;font-size:17px;left:1213.5px;font-weight:bold;letter-spacing:0.55px;width:134px;overflow:hidden;">Апт №060 г.К...</span><div class="a" style="left:0px;top:682.8px;width:1577px;height:1.5px;background:#a8a8a8;"></div><svg style="left:49.5px;top:658.8px" width="19.5" height="19" viewBox="0 0 20 20" preserveAspectRatio="none"><rect x="0.75" y="0.75" width="18.5" height="18.5" fill="#fff" stroke="#333" stroke-width="1.5"/></svg><svg style="left:1119px;top:658.8px" width="19.5" height="19" viewBox="0 0 20 20" preserveAspectRatio="none"><rect x="0.75" y="0.75" width="18.5" height="18.5" fill="#fff" stroke="#333" stroke-width="1.5"/><path d="M3.5 10.5l4.5 4.5 8.5-10.5" fill="none" stroke="#3a3a3a" stroke-width="1.4"/></svg><span class="t b" style="top:660.11px;font-size:17px;left:110px;font-weight:bold;letter-spacing:-0.3px;">7...</span><span class="t b" style="top:660.11px;font-size:17px;left:138.0px;font-weight:bold;letter-spacing:0.544px;">Апт №062 г.Киев, ул.Вышгородская,44б</span><span class="t b" style="top:660.11px;font-size:17px;left:748.5px;font-weight:bold;letter-spacing:0.62px;">61565</span><span class="t b" style="top:660.11px;font-size:17px;left:867px;font-weight:bold;letter-spacing:0.8px;">5260</span><span class="t b" style="top:660.11px;font-size:17px;left:1213.5px;font-weight:bold;letter-spacing:0.55px;width:134px;overflow:hidden;">Апт №062 г.К...</span><div class="a" style="left:0px;top:711.3px;width:1577px;height:1.5px;background:#a8a8a8;"></div><svg style="left:49.5px;top:687.3px" width="19.5" height="19" viewBox="0 0 20 20" preserveAspectRatio="none"><rect x="0.75" y="0.75" width="18.5" height="18.5" fill="#fff" stroke="#333" stroke-width="1.5"/></svg><svg style="left:1119px;top:687.3px" width="19.5" height="19" viewBox="0 0 20 20" preserveAspectRatio="none"><rect x="0.75" y="0.75" width="18.5" height="18.5" fill="#fff" stroke="#333" stroke-width="1.5"/><path d="M3.5 10.5l4.5 4.5 8.5-10.5" fill="none" stroke="#3a3a3a" stroke-width="1.4"/></svg><span class="t b" style="top:688.61px;font-size:17px;left:110px;font-weight:bold;letter-spacing:-0.3px;">7...</span><span class="t b" style="top:688.61px;font-size:17px;left:138.0px;font-weight:bold;letter-spacing:0.322px;">Апт №065 г.Борисполь, ул.Киевский шлях,2/14</span><span class="t b" style="top:688.61px;font-size:17px;left:748.5px;font-weight:bold;letter-spacing:0.62px;">64776</span><span class="t b" style="top:688.61px;font-size:17px;left:867px;font-weight:bold;letter-spacing:0.8px;">5244</span><span class="t b" style="top:688.61px;font-size:17px;left:1213.5px;font-weight:bold;letter-spacing:0.55px;width:134px;overflow:hidden;">Апт №065 г.Б...</span><div class="a" style="left:0px;top:739.8px;width:1577px;height:1.5px;background:#a8a8a8;"></div><svg style="left:49.5px;top:715.8px" width="19.5" height="19" viewBox="0 0 20 20" preserveAspectRatio="none"><rect x="0.75" y="0.75" width="18.5" height="18.5" fill="#fff" stroke="#333" stroke-width="1.5"/></svg><svg style="left:1119px;top:715.8px" width="19.5" height="19" viewBox="0 0 20 20" preserveAspectRatio="none"><rect x="0.75" y="0.75" width="18.5" height="18.5" fill="#fff" stroke="#333" stroke-width="1.5"/><path d="M3.5 10.5l4.5 4.5 8.5-10.5" fill="none" stroke="#3a3a3a" stroke-width="1.4"/></svg><span class="t b" style="top:717.11px;font-size:17px;left:110px;font-weight:bold;letter-spacing:-0.3px;">7...</span><span class="t b" style="top:717.11px;font-size:17px;left:138.0px;font-weight:bold;letter-spacing:0.575px;">Апт №070 г.Мариуполь, пр-т.Ленина,90</span><span class="t b" style="top:717.11px;font-size:17px;left:748.5px;font-weight:bold;letter-spacing:0.62px;">64415</span><span class="t b" style="top:717.11px;font-size:17px;left:867px;font-weight:bold;letter-spacing:0.8px;">4726</span><span class="t b" style="top:717.11px;font-size:17px;left:1213.5px;font-weight:bold;letter-spacing:0.55px;width:134px;overflow:hidden;">Апт №070 г....</span><div class="a" style="left:0px;top:768.3px;width:1577px;height:1.5px;background:#a8a8a8;"></div><svg style="left:49.5px;top:744.3px" width="19.5" height="19" viewBox="0 0 20 20" preserveAspectRatio="none"><rect x="0.75" y="0.75" width="18.5" height="18.5" fill="#fff" stroke="#333" stroke-width="1.5"/></svg><svg style="left:1119px;top:744.3px" width="19.5" height="19" viewBox="0 0 20 20" preserveAspectRatio="none"><rect x="0.75" y="0.75" width="18.5" height="18.5" fill="#fff" stroke="#333" stroke-width="1.5"/><path d="M3.5 10.5l4.5 4.5 8.5-10.5" fill="none" stroke="#3a3a3a" stroke-width="1.4"/></svg><span class="t b" style="top:745.61px;font-size:17px;left:110px;font-weight:bold;letter-spacing:-0.3px;">7...</span><span class="t b" style="top:745.61px;font-size:17px;left:138.0px;font-weight:bold;letter-spacing:0.72px;">Апт №073 г.Мариуполь, пр-т.Металлургов,112</span><span class="t b" style="top:745.61px;font-size:17px;left:748.5px;font-weight:bold;letter-spacing:0.62px;">65609</span><span class="t b" style="top:745.61px;font-size:17px;left:867px;font-weight:bold;letter-spacing:0.8px;">5278</span><span class="t b" style="top:745.61px;font-size:17px;left:1213.5px;font-weight:bold;letter-spacing:0.55px;width:134px;overflow:hidden;">Апт №073 г....</span><div class="a" style="left:0px;top:796.8px;width:1577px;height:1.5px;background:#a8a8a8;"></div><svg style="left:49.5px;top:772.8px" width="19.5" height="19" viewBox="0 0 20 20" preserveAspectRatio="none"><rect x="0.75" y="0.75" width="18.5" height="18.5" fill="#fff" stroke="#333" stroke-width="1.5"/></svg><svg style="left:1119px;top:772.8px" width="19.5" height="19" viewBox="0 0 20 20" preserveAspectRatio="none"><rect x="0.75" y="0.75" width="18.5" height="18.5" fill="#fff" stroke="#333" stroke-width="1.5"/><path d="M3.5 10.5l4.5 4.5 8.5-10.5" fill="none" stroke="#3a3a3a" stroke-width="1.4"/></svg><span class="t b" style="top:774.11px;font-size:17px;left:110px;font-weight:bold;letter-spacing:-0.3px;">7...</span><span class="t b" style="top:774.11px;font-size:17px;left:138.0px;font-weight:bold;letter-spacing:0.345px;">Апт №074 г.П-Хмельницкий, ул.Б.Хмельницкого,104</span><span class="t b" style="top:774.11px;font-size:17px;left:867px;font-weight:bold;letter-spacing:0.8px;">4885</span><span class="t b" style="top:774.11px;font-size:17px;left:1213.5px;font-weight:bold;letter-spacing:0.55px;width:134px;overflow:hidden;">Аптека №74 ...</span><div class="a" style="left:0px;top:825.3px;width:1577px;height:1.5px;background:#a8a8a8;"></div><svg style="left:49.5px;top:801.3px" width="19.5" height="19" viewBox="0 0 20 20" preserveAspectRatio="none"><rect x="0.75" y="0.75" width="18.5" height="18.5" fill="#fff" stroke="#333" stroke-width="1.5"/></svg><svg style="left:1119px;top:801.3px" width="19.5" height="19" viewBox="0 0 20 20" preserveAspectRatio="none"><rect x="0.75" y="0.75" width="18.5" height="18.5" fill="#fff" stroke="#333" stroke-width="1.5"/><path d="M3.5 10.5l4.5 4.5 8.5-10.5" fill="none" stroke="#3a3a3a" stroke-width="1.4"/></svg><span class="t b" style="top:802.61px;font-size:17px;left:110px;font-weight:bold;letter-spacing:-0.3px;">7...</span><span class="t b" style="top:802.61px;font-size:17px;left:138.0px;font-weight:bold;letter-spacing:0.64px;">Апт №075 г.Обухов, ул.Киевская,1/8</span><span class="t b" style="top:802.61px;font-size:17px;left:748.5px;font-weight:bold;letter-spacing:0.62px;">67604</span><span class="t b" style="top:802.61px;font-size:17px;left:867px;font-weight:bold;letter-spacing:0.8px;">5281</span><span class="t b" style="top:802.61px;font-size:17px;left:1213.5px;font-weight:bold;letter-spacing:0.55px;width:134px;overflow:hidden;">Апт №075 г....</span><div class="a" style="left:0px;top:853.8px;width:1577px;height:1.5px;background:#a8a8a8;"></div><svg style="left:49.5px;top:829.8px" width="19.5" height="19" viewBox="0 0 20 20" preserveAspectRatio="none"><rect x="0.75" y="0.75" width="18.5" height="18.5" fill="#fff" stroke="#333" stroke-width="1.5"/></svg><svg style="left:1119px;top:829.8px" width="19.5" height="19" viewBox="0 0 20 20" preserveAspectRatio="none"><rect x="0.75" y="0.75" width="18.5" height="18.5" fill="#fff" stroke="#333" stroke-width="1.5"/><path d="M3.5 10.5l4.5 4.5 8.5-10.5" fill="none" stroke="#3a3a3a" stroke-width="1.4"/></svg><span class="t b" style="top:831.11px;font-size:17px;left:110px;font-weight:bold;letter-spacing:-0.3px;">7...</span><span class="t b" style="top:831.11px;font-size:17px;left:138.0px;font-weight:bold;letter-spacing:0.616px;">Апт №076 г.Украинка, ул.Юности,1б</span><span class="t b" style="top:831.11px;font-size:17px;left:748.5px;font-weight:bold;letter-spacing:0.62px;">67603</span><span class="t b" style="top:831.11px;font-size:17px;left:867px;font-weight:bold;letter-spacing:0.8px;">4904</span><span class="t b" style="top:831.11px;font-size:17px;left:1213.5px;font-weight:bold;letter-spacing:0.55px;width:134px;overflow:hidden;">Апт №076 г....</span><div class="a" style="left:0px;top:882.3px;width:1577px;height:1.5px;background:#a8a8a8;"></div><svg style="left:49.5px;top:858.3px" width="19.5" height="19" viewBox="0 0 20 20" preserveAspectRatio="none"><rect x="0.75" y="0.75" width="18.5" height="18.5" fill="#fff" stroke="#333" stroke-width="1.5"/></svg><svg style="left:1119px;top:858.3px" width="19.5" height="19" viewBox="0 0 20 20" preserveAspectRatio="none"><rect x="0.75" y="0.75" width="18.5" height="18.5" fill="#fff" stroke="#333" stroke-width="1.5"/><path d="M3.5 10.5l4.5 4.5 8.5-10.5" fill="none" stroke="#3a3a3a" stroke-width="1.4"/></svg><span class="t b" style="top:859.61px;font-size:17px;left:110px;font-weight:bold;letter-spacing:-0.3px;">7...</span><span class="t b" style="top:859.61px;font-size:17px;left:138.0px;font-weight:bold;letter-spacing:0.476px;">Апт №078 г.Киев, пер.Политехнический,1/3</span><span class="t b" style="top:859.61px;font-size:17px;left:748.5px;font-weight:bold;letter-spacing:0.62px;">67924</span><span class="t b" style="top:859.61px;font-size:17px;left:867px;font-weight:bold;letter-spacing:0.8px;">5261</span><span class="t b" style="top:859.61px;font-size:17px;left:1213.5px;font-weight:bold;letter-spacing:0.55px;width:134px;overflow:hidden;">Апт №078 г.К...</span><div class="a" style="left:0px;top:910.8px;width:1577px;height:1.5px;background:#a8a8a8;"></div><svg style="left:49.5px;top:886.8px" width="19.5" height="19" viewBox="0 0 20 20" preserveAspectRatio="none"><rect x="0.75" y="0.75" width="18.5" height="18.5" fill="#fff" stroke="#333" stroke-width="1.5"/></svg><svg style="left:1119px;top:886.8px" width="19.5" height="19" viewBox="0 0 20 20" preserveAspectRatio="none"><rect x="0.75" y="0.75" width="18.5" height="18.5" fill="#fff" stroke="#333" stroke-width="1.5"/><path d="M3.5 10.5l4.5 4.5 8.5-10.5" fill="none" stroke="#3a3a3a" stroke-width="1.4"/></svg><span class="t b" style="top:888.11px;font-size:17px;left:110px;font-weight:bold;letter-spacing:-0.3px;">7...</span><span class="t b" style="top:888.11px;font-size:17px;left:138.0px;font-weight:bold;letter-spacing:0.489px;">Апт №079 г.Мироновка, ул.Ленина,61а</span><span class="t b" style="top:888.11px;font-size:17px;left:748.5px;font-weight:bold;letter-spacing:0.62px;">68560</span><span class="t b" style="top:888.11px;font-size:17px;left:867px;font-weight:bold;letter-spacing:0.8px;">5280</span><span class="t b" style="top:888.11px;font-size:17px;left:1213.5px;font-weight:bold;letter-spacing:0.55px;width:134px;overflow:hidden;">Апт №079 г....</span><div class="a" style="left:0px;top:939.3px;width:1577px;height:1.5px;background:#a8a8a8;"></div><svg style="left:49.5px;top:915.3px" width="19.5" height="19" viewBox="0 0 20 20" preserveAspectRatio="none"><rect x="0.75" y="0.75" width="18.5" height="18.5" fill="#fff" stroke="#333" stroke-width="1.5"/></svg><svg style="left:1119px;top:915.3px" width="19.5" height="19" viewBox="0 0 20 20" preserveAspectRatio="none"><rect x="0.75" y="0.75" width="18.5" height="18.5" fill="#fff" stroke="#333" stroke-width="1.5"/><path d="M3.5 10.5l4.5 4.5 8.5-10.5" fill="none" stroke="#3a3a3a" stroke-width="1.4"/></svg><span class="t b" style="top:916.61px;font-size:17px;left:110px;font-weight:bold;letter-spacing:-0.3px;">7...</span><span class="t b" style="top:916.61px;font-size:17px;left:138.0px;font-weight:bold;letter-spacing:0.579px;">Апт №087 г.Обухов ул.Киевская,166</span><span class="t b" style="top:916.61px;font-size:17px;left:867px;font-weight:bold;letter-spacing:0.8px;">5164</span><span class="t b" style="top:916.61px;font-size:17px;left:1213.5px;font-weight:bold;letter-spacing:0.55px;width:134px;overflow:hidden;">Аптека №87 ...</span><div class="a" style="left:0px;top:967.8px;width:1577px;height:1.5px;background:#a8a8a8;"></div><svg style="left:49.5px;top:943.8px" width="19.5" height="19" viewBox="0 0 20 20" preserveAspectRatio="none"><rect x="0.75" y="0.75" width="18.5" height="18.5" fill="#fff" stroke="#333" stroke-width="1.5"/></svg><svg style="left:1119px;top:943.8px" width="19.5" height="19" viewBox="0 0 20 20" preserveAspectRatio="none"><rect x="0.75" y="0.75" width="18.5" height="18.5" fill="#fff" stroke="#333" stroke-width="1.5"/><path d="M3.5 10.5l4.5 4.5 8.5-10.5" fill="none" stroke="#3a3a3a" stroke-width="1.4"/></svg><span class="t b" style="top:945.11px;font-size:17px;left:110px;font-weight:bold;letter-spacing:-0.3px;">7...</span><span class="t b" style="top:945.11px;font-size:17px;left:138.0px;font-weight:bold;letter-spacing:0.67px;">Апт №09 г.Киев, ул.Баггаутовская,1(терапия)</span><span class="t b" style="top:945.11px;font-size:17px;left:867px;font-weight:bold;letter-spacing:0.8px;">2786</span><span class="t b" style="top:945.11px;font-size:17px;left:1213.5px;font-weight:bold;letter-spacing:0.55px;width:134px;overflow:hidden;">ул.Баггаутов...</span><div class="a" style="left:0px;top:996.3px;width:1577px;height:1.5px;background:#a8a8a8;"></div><svg style="left:49.5px;top:972.3px" width="19.5" height="19" viewBox="0 0 20 20" preserveAspectRatio="none"><rect x="0.75" y="0.75" width="18.5" height="18.5" fill="#fff" stroke="#333" stroke-width="1.5"/></svg><svg style="left:1119px;top:972.3px" width="19.5" height="19" viewBox="0 0 20 20" preserveAspectRatio="none"><rect x="0.75" y="0.75" width="18.5" height="18.5" fill="#fff" stroke="#333" stroke-width="1.5"/><path d="M3.5 10.5l4.5 4.5 8.5-10.5" fill="none" stroke="#3a3a3a" stroke-width="1.4"/></svg><span class="t b" style="top:973.61px;font-size:17px;left:110px;font-weight:bold;letter-spacing:-0.3px;">7...</span><span class="t b" style="top:973.61px;font-size:17px;left:138.0px;font-weight:bold;letter-spacing:0.731px;">Апт №090 г.Киев, ул.Пирогова,7/1</span><span class="t b" style="top:973.61px;font-size:17px;left:748.5px;font-weight:bold;letter-spacing:0.62px;">72700</span><span class="t b" style="top:973.61px;font-size:17px;left:867px;font-weight:bold;letter-spacing:0.8px;">5262</span><span class="t b" style="top:973.61px;font-size:17px;left:1213.5px;font-weight:bold;letter-spacing:0.55px;width:134px;overflow:hidden;">Апт №090 г.К...</span><svg style="left:5.8px;top:35.5px" width="9" height="15" viewBox="0 0 9 15"><path d="M0.5 0.5v14l8-7z" fill="#000"/></svg></div><div class="a" style="left:558px;top:1249.5px;width:1577px;height:2.5px;background:#a6a6a6;"></div><div class="a" style="left:558px;top:1252px;width:1577px;height:32px;background:#f0f0f0;border-bottom:1.5px solid #c4c4c4;"></div><div class="a" style="left:575px;top:1252px;width:1.5px;height:31px;background:#b4b4b4;"></div><div class="a" style="left:579px;top:1254.5px;width:81px;height:27px;background:#e4e7e9;border:1px solid #d4d8da;"></div><div class="a" style="left:695px;top:1254.5px;width:607px;height:27px;background:#e4e7e9;border:1px solid #d4d8da;"></div><span class="t b" style="top:1258.11px;font-size:17px;right:1503.5px;font-weight:bold;">0</span><span class="t b" style="top:1258.11px;font-size:17px;left:699.0px;font-weight:bold;letter-spacing:0.198px;">Запис 2 із 151</span><div class="a" style="left:2135.5px;top:185px;width:23.5px;height:1100px;background:#f0f0f0;"></div><div class="a" style="left:2136px;top:211px;width:22.5px;height:235px;background:#cdcdcd;"></div><svg style="left:2141.5px;top:194.5px" width="12" height="8" viewBox="0 0 12 8"><path d="M1 7l5-5 5 5" fill="none" stroke="#555" stroke-width="2.6"/></svg><svg style="left:2141.5px;top:1267px" width="12" height="8" viewBox="0 0 12 8"><path d="M1 1l5 5 5-5" fill="none" stroke="#555" stroke-width="2.6"/></svg><div class="a" style="left:558px;top:1285.5px;width:1577px;height:24px;background:#f0f0f0;"></div><div class="a" style="left:583.5px;top:1287px;width:1422px;height:21px;background:#cdcdcd;"></div><svg style="left:566px;top:1291.5px" width="8" height="12" viewBox="0 0 8 12"><path d="M7 1l-5 5 5 5" fill="none" stroke="#555" stroke-width="2.6"/></svg><svg style="left:2118px;top:1291.5px" width="8" height="12" viewBox="0 0 8 12"><path d="M1 1l5 5-5 5" fill="none" stroke="#555" stroke-width="2.6"/></svg><div class="a" style="left:4px;top:1313.3px;width:188px;height:34.3px;background:#f0f0f0;border:2px solid #1c1c1c;"></div><span class="t " style="top:1321.38px;font-size:16.8px;left:9.0px;color:#111;letter-spacing:-0.404px;">Головна</span><div class="a" style="left:194.5px;top:1313.3px;width:188px;height:34.3px;background:#f0f0f0;border:2px solid #1c1c1c;"></div><span class="t " style="top:1321.38px;font-size:16.8px;left:199.0px;color:#111;letter-spacing:-0.383px;">Асортимент матриці</span><span class="t " style="top:1321.38px;font-size:16.8px;left:360.5px;color:#111;letter-spacing:0.736px;">...</span><div class="a" style="left:385px;top:1313.3px;width:187.8px;height:34.3px;background:#ffd2a6;border:1.8px solid #1a82dc;"></div><span class="t " style="top:1321.38px;font-size:16.8px;left:389.5px;color:#111;letter-spacing:-0.383px;">Асортимент матриці</span><span class="t " style="top:1321.38px;font-size:16.8px;left:551.0px;color:#111;letter-spacing:0.736px;">...</span><div class="a" style="left:0px;top:1351px;width:2159px;height:1.5px;background:#d9d9d9;"></div><div class="a" style="left:297.5px;top:1354px;width:1px;height:25px;background:#d0d0d0;"></div><div class="a" style="left:604px;top:1354px;width:1px;height:25px;background:#d0d0d0;"></div><div class="a" style="left:661.5px;top:1354px;width:1px;height:25px;background:#d0d0d0;"></div><div class="a" style="left:1117.5px;top:1354px;width:1px;height:25px;background:#d0d0d0;"></div><span class="t " style="top:1356.35px;left:30.50px;font-size:19.2px;letter-spacing:-0.059px;transform:scaleX(0.86);transform-origin:0 0;color:#111;">База даних: TASA3@TITAN</span><span class="t " style="top:1356.35px;left:328.50px;font-size:19.2px;letter-spacing:-0.213px;transform:scaleX(0.86);transform-origin:0 0;color:#111;">Користувач: GIFT</span><span class="t " style="top:1356.35px;left:635.00px;font-size:19.2px;letter-spacing:0px;transform:scaleX(0.86);transform-origin:0 0;color:#111;">2</span><span class="t " style="top:1356.35px;left:666.50px;font-size:19.2px;letter-spacing:-0.013px;transform:scaleX(0.86);transform-origin:0 0;color:#111;">Кассовый аппарат не подключен</span><span class="t " style="top:1356.35px;left:1123.50px;font-size:19.2px;letter-spacing:-0.241px;transform:scaleX(0.86);transform-origin:0 0;color:#111;">Зона: Склад [1]</span><svg style="left:4px;top:1357px" width="19" height="21" viewBox="0 0 19 21"><defs><linearGradient id="dbg" x1="0" y1="0" x2="1" y2="1"><stop offset="0" stop-color="#dcd8f4"/><stop offset="0.5" stop-color="#aaa4d6"/><stop offset="1" stop-color="#6f67ad"/></linearGradient></defs><path d="M1.5 1.5q0-1 1-1h13.5q2.5 0 2.5 2.5v14.5q0 1.5-1.5 1.7l-9.5 1.3q-1.5 0-2.5-1l-3-2.5q-0.5-0.5-0.5-1.5z" fill="url(#dbg)"/><path d="M1 5.8l3 1.2h14.5v10h-14.5l-3-1.5z" fill="#1e84dc"/><g stroke="#9fc9f2" stroke-width="1"><path d="M4.5 9.3h14M4.5 12h14M4.5 14.7h14"/></g><g fill="#e6f0fb"><rect x="1.5" y="7.6" width="2" height="1.1"/><rect x="1.5" y="10.3" width="2" height="1.1"/><rect x="1.5" y="13" width="2" height="1.1"/></g></svg><svg style="left:303px;top:1356px" width="18" height="22" viewBox="0 0 18 22"><defs><radialGradient id="ug" cx="0.45" cy="0.35" r="0.7"><stop offset="0" stop-color="#e6e8fa"/><stop offset="0.6" stop-color="#9aa0e0"/><stop offset="1" stop-color="#6a6ec4"/></radialGradient></defs><circle cx="6" cy="6" r="5.3" fill="#ee2f0c"/><ellipse cx="9.5" cy="17.3" rx="7.8" ry="4.6" fill="url(#ug)"/><ellipse cx="9.8" cy="8.6" rx="4.8" ry="5.5" fill="url(#ug)"/><path d="M6.3 11.8q3.4 1.5 6.8 0l-3.4 3.8z" fill="#f0a04a"/></svg><svg style="left:606px;top:1355px" width="22" height="24" viewBox="0 0 22 24"><defs><linearGradient id="pg" x1="0" y1="0" x2="1" y2="1"><stop offset="0" stop-color="#dcdcf4"/><stop offset="1" stop-color="#9c9cd4"/></linearGradient></defs><path d="M12.5 0.8l2.5 5" stroke="#555" stroke-width="1.1" fill="none"/><path d="M1.5 9l3.5-5h8l7.5 5.5v12h-5l-1.5-4.5-4 5.5-2.5-6-3 5.5h-3z" fill="#7274c0"/><path d="M1.5 9l3.5-5.5h8l7.5 6-9 1.5z" fill="url(#pg)"/><path d="M5.5 9.5l-2.5 11.5" stroke="#1a1a1a" stroke-width="3.2"/><path d="M5.2 9l-2.7 11.5" stroke="#f3d23a" stroke-width="2.2"/><path d="M14 13l-3 10" stroke="#1a1a1a" stroke-width="3.2"/><path d="M13.7 12.8l-3 10" stroke="#f0b830" stroke-width="2.2"/></svg><svg style="left:0;top:0" width="2159" height="1379" viewBox="0 0 2159 1379"><path d="M187.2 160.8L204.2 168.1 203.5 171.6 199 170.8 516.4 603.1 515.1 603.8 192.5 174.6 192 179.9 188.3 178.7z" fill="#f60000" stroke="#f60000" stroke-width="0.6" stroke-linejoin="round"/></svg></body></html>
